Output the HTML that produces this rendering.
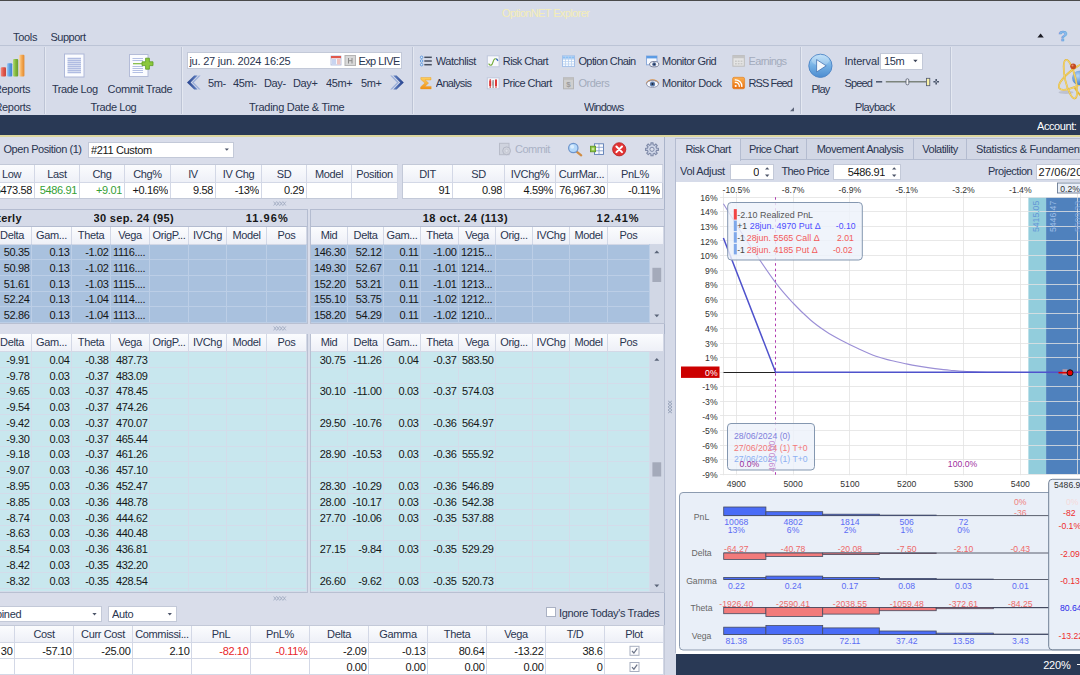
<!DOCTYPE html><html><head><meta charset='utf-8'><title>OptionNET Explorer</title><style>
html,body{margin:0;padding:0;}
body{width:1080px;height:675px;overflow:hidden;position:relative;background:#d6dbe9;
 font-family:"Liberation Sans",sans-serif;font-size:11px;letter-spacing:-0.35px;color:#2a3550;}
div{position:absolute;box-sizing:border-box;white-space:nowrap;overflow:hidden;}
svg{position:absolute;overflow:visible}
.t{overflow:hidden}
.hd{background:linear-gradient(#fbfcfe,#eef0f7);border-right:1px solid #d3d8e6;border-bottom:1px solid #d3d8e6;text-align:center}
.b{font-weight:bold;font-family:"Liberation Sans",sans-serif;letter-spacing:0}
</style></head><body>
<div style="left:0px;top:0px;width:1080px;height:1px;background:#4a4a4a"></div>
<div class="t" style="left:502px;top:6px;width:130px;height:14px;line-height:14px;text-align:left;color:#f4edb6;letter-spacing:-0.613px;">OptionNET Explorer</div>
<div class="t" style="left:13px;top:30px;width:30px;height:14px;line-height:14px;text-align:left;letter-spacing:-0.316px;">Tools</div>
<div class="t" style="left:50.5px;top:30px;width:45px;height:14px;line-height:14px;text-align:left;letter-spacing:-0.490px;">Support</div>
<div style="left:0px;top:45px;width:1080px;height:1px;background:#bcc4d6"></div>
<div style="left:0px;top:46px;width:1080px;height:69px;background:#d6dbe9"></div>
<div style="left:44px;top:47px;width:1px;height:67px;background:#bdc4d5"></div>
<div style="left:45px;top:47px;width:1px;height:67px;background:#e4e8f1"></div>
<div style="left:181px;top:47px;width:1px;height:67px;background:#bdc4d5"></div>
<div style="left:182px;top:47px;width:1px;height:67px;background:#e4e8f1"></div>
<div style="left:412px;top:47px;width:1px;height:67px;background:#bdc4d5"></div>
<div style="left:413px;top:47px;width:1px;height:67px;background:#e4e8f1"></div>
<div style="left:800px;top:47px;width:1px;height:67px;background:#bdc4d5"></div>
<div style="left:801px;top:47px;width:1px;height:67px;background:#e4e8f1"></div>
<div style="left:950px;top:47px;width:1px;height:67px;background:#bdc4d5"></div>
<div style="left:951px;top:47px;width:1px;height:67px;background:#e4e8f1"></div>
<div style="left:0px;top:115px;width:1080px;height:20px;background:#293955"></div>
<div style="left:0px;top:135px;width:1080px;height:2px;background:#ddd79e"></div>
<div class="t" style="left:1037px;top:119px;width:48px;height:14px;line-height:14px;text-align:left;color:#fff;letter-spacing:-0.425px;">Account:</div>
<div class="t" style="left:-6px;top:82px;width:40px;height:14px;line-height:14px;text-align:left;">Reports</div>
<div class="t" style="left:-5.5px;top:100px;width:40px;height:14px;line-height:14px;text-align:left;">Reports</div>
<div class="t" style="left:52px;top:82px;width:48px;height:14px;line-height:14px;text-align:left;letter-spacing:-0.460px;">Trade Log</div>
<div class="t" style="left:107.6px;top:82px;width:70px;height:14px;line-height:14px;text-align:left;letter-spacing:-0.373px;">Commit Trade</div>
<div class="t" style="left:90.4px;top:100px;width:70px;height:14px;line-height:14px;text-align:left;letter-spacing:-0.426px;">Trade Log</div>
<div style="left:187px;top:52px;width:215px;height:17px;background:#fff;border:1px solid #c3c9d8"></div>
<div class="t" style="left:189.4px;top:54px;width:110px;height:14px;line-height:14px;text-align:left;letter-spacing:-0.214px;">ju. 27 jun. 2024 16:25</div>
<div class="t" style="left:358.4px;top:54px;width:42px;height:14px;line-height:14px;text-align:left;letter-spacing:-0.557px;">Exp LIVE</div>
<div class="t" style="left:208px;top:76px;width:34px;height:14px;line-height:14px;text-align:left;">5m-</div>
<div class="t" style="left:233px;top:76px;width:34px;height:14px;line-height:14px;text-align:left;">45m-</div>
<div class="t" style="left:264px;top:76px;width:34px;height:14px;line-height:14px;text-align:left;">Day-</div>
<div class="t" style="left:293px;top:76px;width:34px;height:14px;line-height:14px;text-align:left;">Day+</div>
<div class="t" style="left:326px;top:76px;width:34px;height:14px;line-height:14px;text-align:left;">45m+</div>
<div class="t" style="left:361px;top:76px;width:34px;height:14px;line-height:14px;text-align:left;">5m+</div>
<div class="t" style="left:249px;top:100px;width:135px;height:14px;line-height:14px;text-align:left;letter-spacing:-0.267px;">Trading Date &amp; Time</div>
<div class="t" style="left:435.8px;top:54px;width:45px;height:14px;line-height:14px;text-align:left;letter-spacing:-0.468px;">Watchlist</div>
<div class="t" style="left:435.8px;top:76px;width:45px;height:14px;line-height:14px;text-align:left;letter-spacing:-0.695px;">Analysis</div>
<div class="t" style="left:502.8px;top:54px;width:50px;height:14px;line-height:14px;text-align:left;letter-spacing:-0.614px;">Risk Chart</div>
<div class="t" style="left:502.8px;top:76px;width:55px;height:14px;line-height:14px;text-align:left;letter-spacing:-0.556px;">Price Chart</div>
<div class="t" style="left:578.4px;top:54px;width:62px;height:14px;line-height:14px;text-align:left;letter-spacing:-0.584px;">Option Chain</div>
<div class="t" style="left:578.4px;top:76px;width:40px;height:14px;line-height:14px;text-align:left;color:#a3abbc;letter-spacing:-0.453px;">Orders</div>
<div class="t" style="left:662px;top:54px;width:62px;height:14px;line-height:14px;text-align:left;letter-spacing:-0.526px;">Monitor Grid</div>
<div class="t" style="left:662px;top:76px;width:64px;height:14px;line-height:14px;text-align:left;letter-spacing:-0.433px;">Monitor Dock</div>
<div class="t" style="left:748.6px;top:54px;width:45px;height:14px;line-height:14px;text-align:left;color:#a3abbc;letter-spacing:-0.702px;">Earnings</div>
<div class="t" style="left:748.6px;top:76px;width:50px;height:14px;line-height:14px;text-align:left;letter-spacing:-0.918px;">RSS Feed</div>
<div class="t" style="left:584px;top:100px;width:90px;height:14px;line-height:14px;text-align:left;letter-spacing:-0.746px;">Windows</div>
<div class="t" style="left:811.4px;top:82px;width:24px;height:14px;line-height:14px;text-align:left;letter-spacing:-0.875px;">Play</div>
<div class="t" style="left:844.4px;top:54px;width:40px;height:14px;line-height:14px;text-align:left;letter-spacing:-0.159px;">Interval</div>
<div style="left:880px;top:53px;width:43px;height:17px;background:#fff;border:1px solid #c3c9d8"></div>
<div class="t" style="left:884px;top:54px;width:25px;height:14px;line-height:14px;text-align:left;">15m</div>
<div class="t" style="left:844.4px;top:76px;width:35px;height:14px;line-height:14px;text-align:left;letter-spacing:-0.802px;">Speed</div>
<div class="t" style="left:855px;top:100px;width:90px;height:14px;line-height:14px;text-align:left;letter-spacing:-0.629px;">Playback</div>
<div style="left:0px;top:137px;width:665px;height:538px;background:#d9ddea"></div>
<div style="left:664px;top:137px;width:1px;height:538px;background:#aab4ca"></div>
<div style="left:665px;top:137px;width:11px;height:538px;background:#d5dae8"></div>
<div class="t" style="left:3.4px;top:142px;width:82px;height:15px;line-height:15px;text-align:left;letter-spacing:-0.435px;">Open Position (1)</div>
<div style="left:88px;top:142px;width:146px;height:16px;background:#fff;border:1px solid #c3c9d8"></div>
<div class="t" style="left:91px;top:143px;width:100px;height:14px;line-height:14px;text-align:left;color:#161616">#211 Custom</div>
<div class="t" style="left:515px;top:142px;width:40px;height:15px;line-height:15px;text-align:left;color:#a9b1c5;letter-spacing:-0.515px;">Commit</div>
<div style="left:-12px;top:164px;width:410px;height:35px;background:#fff;border:1px solid #c3c9d8"></div>
<div class="t hd" style="left:-11px;top:165px;width:46px;height:18px;line-height:18px;text-align:center;">Low</div>
<div class="t" style="left:-11px;top:183px;width:43px;height:15px;line-height:15px;text-align:right;color:#161616;">5473.58</div>
<div style="left:34px;top:183px;width:1px;height:15px;background:#d3d8e6"></div>
<div class="t hd" style="left:35px;top:165px;width:45px;height:18px;line-height:18px;text-align:center;">Last</div>
<div class="t" style="left:35px;top:183px;width:42px;height:15px;line-height:15px;text-align:right;color:#35a035;">5486.91</div>
<div style="left:79px;top:183px;width:1px;height:15px;background:#d3d8e6"></div>
<div class="t hd" style="left:80px;top:165px;width:45px;height:18px;line-height:18px;text-align:center;">Chg</div>
<div class="t" style="left:80px;top:183px;width:42px;height:15px;line-height:15px;text-align:right;color:#35a035;">+9.01</div>
<div style="left:124px;top:183px;width:1px;height:15px;background:#d3d8e6"></div>
<div class="t hd" style="left:125px;top:165px;width:46px;height:18px;line-height:18px;text-align:center;">Chg%</div>
<div class="t" style="left:125px;top:183px;width:43px;height:15px;line-height:15px;text-align:right;color:#161616;">+0.16%</div>
<div style="left:170px;top:183px;width:1px;height:15px;background:#d3d8e6"></div>
<div class="t hd" style="left:171px;top:165px;width:45px;height:18px;line-height:18px;text-align:center;">IV</div>
<div class="t" style="left:171px;top:183px;width:42px;height:15px;line-height:15px;text-align:right;color:#161616;">9.58</div>
<div style="left:215px;top:183px;width:1px;height:15px;background:#d3d8e6"></div>
<div class="t hd" style="left:216px;top:165px;width:46px;height:18px;line-height:18px;text-align:center;">IV Chg</div>
<div class="t" style="left:216px;top:183px;width:43px;height:15px;line-height:15px;text-align:right;color:#161616;">-13%</div>
<div style="left:261px;top:183px;width:1px;height:15px;background:#d3d8e6"></div>
<div class="t hd" style="left:262px;top:165px;width:45px;height:18px;line-height:18px;text-align:center;">SD</div>
<div class="t" style="left:262px;top:183px;width:42px;height:15px;line-height:15px;text-align:right;color:#161616;">0.29</div>
<div style="left:306px;top:183px;width:1px;height:15px;background:#d3d8e6"></div>
<div class="t hd" style="left:307px;top:165px;width:45px;height:18px;line-height:18px;text-align:center;">Model</div>
<div class="t" style="left:307px;top:183px;width:42px;height:15px;line-height:15px;text-align:right;color:#161616;"></div>
<div style="left:351px;top:183px;width:1px;height:15px;background:#d3d8e6"></div>
<div class="t hd" style="left:352px;top:165px;width:46px;height:18px;line-height:18px;text-align:center;">Position</div>
<div class="t" style="left:352px;top:183px;width:43px;height:15px;line-height:15px;text-align:right;color:#161616;"></div>
<div style="left:397px;top:183px;width:1px;height:15px;background:#d3d8e6"></div>
<div style="left:402px;top:164px;width:261px;height:35px;background:#fff;border:1px solid #c3c9d8"></div>
<div class="t hd" style="left:403px;top:165px;width:50px;height:18px;line-height:18px;text-align:center;">DIT</div>
<div class="t" style="left:402px;top:183px;width:48px;height:15px;line-height:15px;text-align:right;color:#161616">91</div>
<div style="left:452px;top:183px;width:1px;height:15px;background:#d3d8e6"></div>
<div class="t hd" style="left:453px;top:165px;width:52px;height:18px;line-height:18px;text-align:center;">SD</div>
<div class="t" style="left:453px;top:183px;width:49px;height:15px;line-height:15px;text-align:right;color:#161616">0.98</div>
<div style="left:504px;top:183px;width:1px;height:15px;background:#d3d8e6"></div>
<div class="t hd" style="left:505px;top:165px;width:51px;height:18px;line-height:18px;text-align:center;">IVChg%</div>
<div class="t" style="left:505px;top:183px;width:48px;height:15px;line-height:15px;text-align:right;color:#161616">4.59%</div>
<div style="left:555px;top:183px;width:1px;height:15px;background:#d3d8e6"></div>
<div class="t hd" style="left:556px;top:165px;width:52px;height:18px;line-height:18px;text-align:center;">CurrMar...</div>
<div class="t" style="left:556px;top:183px;width:49px;height:15px;line-height:15px;text-align:right;color:#161616">76,967.30</div>
<div style="left:607px;top:183px;width:1px;height:15px;background:#d3d8e6"></div>
<div class="t hd" style="left:608px;top:165px;width:55px;height:18px;line-height:18px;text-align:center;">PnL%</div>
<div class="t" style="left:608px;top:183px;width:52px;height:15px;line-height:15px;text-align:right;color:#161616">-0.11%</div>
<div style="left:-5px;top:209.2px;width:313px;height:18px;background:#d5dae8;border:1px solid #b4bcd0"></div>
<div style="left:310px;top:209.2px;width:355px;height:18px;background:#d5dae8;border:1px solid #b4bcd0"></div>
<div class="t" style="left:-60px;top:210.2px;width:81.8px;height:16px;line-height:16px;text-align:right;color:#161616;font-weight:bold;letter-spacing:0.25px;">Quarterly</div>
<div class="t" style="left:93.5px;top:210.2px;width:100px;height:16px;line-height:16px;text-align:left;color:#161616;font-weight:bold;letter-spacing:0.346px;">30 sep. 24 (95)</div>
<div class="t" style="left:245.8px;top:210.2px;width:50px;height:16px;line-height:16px;text-align:left;color:#161616;font-weight:bold;letter-spacing:1.033px;">11.96%</div>
<div class="t" style="left:422.8px;top:210.2px;width:100px;height:16px;line-height:16px;text-align:left;color:#161616;font-weight:bold;letter-spacing:0.433px;">18 oct. 24 (113)</div>
<div class="t" style="left:596.6px;top:210.2px;width:50px;height:16px;line-height:16px;text-align:left;color:#161616;font-weight:bold;letter-spacing:0.932px;">12.41%</div>
<div style="left:-5px;top:226.7px;width:313px;height:97.30000000000001px;background:#a9c1de;border:1px solid #b9c0d2"></div>
<div style="left:310px;top:226.7px;width:355px;height:97.30000000000001px;background:#a9c1de;border:1px solid #b9c0d2"></div>
<div class="t hd" style="left:-7px;top:227px;width:39px;height:18px;line-height:18px;text-align:center;line-height:17px;">Delta</div>
<div class="t hd" style="left:32px;top:227px;width:40px;height:18px;line-height:18px;text-align:center;line-height:17px;">Gam...</div>
<div class="t hd" style="left:72px;top:227px;width:39px;height:18px;line-height:18px;text-align:center;line-height:17px;">Theta</div>
<div class="t hd" style="left:111px;top:227px;width:39px;height:18px;line-height:18px;text-align:center;line-height:17px;">Vega</div>
<div class="t hd" style="left:150px;top:227px;width:39px;height:18px;line-height:18px;text-align:center;line-height:17px;">OrigP...</div>
<div class="t hd" style="left:189px;top:227px;width:38px;height:18px;line-height:18px;text-align:center;line-height:17px;">IVChg</div>
<div class="t hd" style="left:227px;top:227px;width:40px;height:18px;line-height:18px;text-align:center;line-height:17px;">Model</div>
<div class="t hd" style="left:267px;top:227px;width:40px;height:18px;line-height:18px;text-align:center;line-height:17px;">Pos</div>
<div class="t hd" style="left:311px;top:227px;width:37px;height:18px;line-height:18px;text-align:center;line-height:17px;">Mid</div>
<div class="t hd" style="left:348px;top:227px;width:36px;height:18px;line-height:18px;text-align:center;line-height:17px;">Delta</div>
<div class="t hd" style="left:384px;top:227px;width:37px;height:18px;line-height:18px;text-align:center;line-height:17px;">Gam...</div>
<div class="t hd" style="left:421px;top:227px;width:38px;height:18px;line-height:18px;text-align:center;line-height:17px;">Theta</div>
<div class="t hd" style="left:459px;top:227px;width:37px;height:18px;line-height:18px;text-align:center;line-height:17px;">Vega</div>
<div class="t hd" style="left:496px;top:227px;width:37px;height:18px;line-height:18px;text-align:center;line-height:17px;">Orig...</div>
<div class="t hd" style="left:533px;top:227px;width:37px;height:18px;line-height:18px;text-align:center;line-height:17px;">IVChg</div>
<div class="t hd" style="left:570px;top:227px;width:38px;height:18px;line-height:18px;text-align:center;line-height:17px;">Model</div>
<div class="t hd" style="left:608px;top:227px;width:42px;height:18px;line-height:18px;text-align:center;line-height:17px;">Pos</div>
<div class="hd" style="left:649px;top:227px;width:15px;height:18px;"></div>
<div style="left:650px;top:245px;width:14px;height:78px;background:#d1d7e5"></div>
<div class="t" style="left:-7px;top:244px;width:39px;height:16px;line-height:16px;text-align:right;padding:0 1.4px 0 2px;color:#161616;border-right:1px solid #bccee6;border-bottom:1px solid #bccee6;">50.35</div>
<div class="t" style="left:32px;top:244px;width:40px;height:16px;line-height:16px;text-align:right;padding:0 1.4px 0 2px;color:#161616;border-right:1px solid #bccee6;border-bottom:1px solid #bccee6;">0.13</div>
<div class="t" style="left:72px;top:244px;width:39px;height:16px;line-height:16px;text-align:right;padding:0 1.4px 0 2px;color:#161616;border-right:1px solid #bccee6;border-bottom:1px solid #bccee6;">-1.02</div>
<div class="t" style="left:111px;top:244px;width:39px;height:16px;line-height:16px;text-align:left;padding:0 1.4px 0 2px;color:#161616;border-right:1px solid #bccee6;border-bottom:1px solid #bccee6;">1116....</div>
<div class="t" style="left:150px;top:244px;width:39px;height:16px;line-height:16px;text-align:right;padding:0 1.4px 0 2px;color:#161616;border-right:1px solid #bccee6;border-bottom:1px solid #bccee6;"></div>
<div class="t" style="left:189px;top:244px;width:38px;height:16px;line-height:16px;text-align:right;padding:0 1.4px 0 2px;color:#161616;border-right:1px solid #bccee6;border-bottom:1px solid #bccee6;"></div>
<div class="t" style="left:227px;top:244px;width:40px;height:16px;line-height:16px;text-align:right;padding:0 1.4px 0 2px;color:#161616;border-right:1px solid #bccee6;border-bottom:1px solid #bccee6;"></div>
<div class="t" style="left:267px;top:244px;width:40px;height:16px;line-height:16px;text-align:right;padding:0 1.4px 0 2px;color:#161616;border-right:1px solid #bccee6;border-bottom:1px solid #bccee6;"></div>
<div class="t" style="left:311px;top:244px;width:37px;height:16px;line-height:16px;text-align:right;padding:0 1.4px 0 2px;color:#161616;border-right:1px solid #bccee6;border-bottom:1px solid #bccee6;">146.30</div>
<div class="t" style="left:348px;top:244px;width:36px;height:16px;line-height:16px;text-align:right;padding:0 1.4px 0 2px;color:#161616;border-right:1px solid #bccee6;border-bottom:1px solid #bccee6;">52.12</div>
<div class="t" style="left:384px;top:244px;width:37px;height:16px;line-height:16px;text-align:right;padding:0 1.4px 0 2px;color:#161616;border-right:1px solid #bccee6;border-bottom:1px solid #bccee6;">0.11</div>
<div class="t" style="left:421px;top:244px;width:38px;height:16px;line-height:16px;text-align:right;padding:0 1.4px 0 2px;color:#161616;border-right:1px solid #bccee6;border-bottom:1px solid #bccee6;">-1.00</div>
<div class="t" style="left:459px;top:244px;width:37px;height:16px;line-height:16px;text-align:left;padding:0 1.4px 0 2px;color:#161616;border-right:1px solid #bccee6;border-bottom:1px solid #bccee6;">1215...</div>
<div class="t" style="left:496px;top:244px;width:37px;height:16px;line-height:16px;text-align:right;padding:0 1.4px 0 2px;color:#161616;border-right:1px solid #bccee6;border-bottom:1px solid #bccee6;"></div>
<div class="t" style="left:533px;top:244px;width:37px;height:16px;line-height:16px;text-align:right;padding:0 1.4px 0 2px;color:#161616;border-right:1px solid #bccee6;border-bottom:1px solid #bccee6;"></div>
<div class="t" style="left:570px;top:244px;width:38px;height:16px;line-height:16px;text-align:right;padding:0 1.4px 0 2px;color:#161616;border-right:1px solid #bccee6;border-bottom:1px solid #bccee6;"></div>
<div class="t" style="left:608px;top:244px;width:42px;height:16px;line-height:16px;text-align:right;padding:0 1.4px 0 2px;color:#161616;border-right:1px solid #bccee6;border-bottom:1px solid #bccee6;"></div>
<div class="t" style="left:-7px;top:260px;width:39px;height:16px;line-height:16px;text-align:right;padding:0 1.4px 0 2px;color:#161616;border-right:1px solid #bccee6;border-bottom:1px solid #bccee6;">50.98</div>
<div class="t" style="left:32px;top:260px;width:40px;height:16px;line-height:16px;text-align:right;padding:0 1.4px 0 2px;color:#161616;border-right:1px solid #bccee6;border-bottom:1px solid #bccee6;">0.13</div>
<div class="t" style="left:72px;top:260px;width:39px;height:16px;line-height:16px;text-align:right;padding:0 1.4px 0 2px;color:#161616;border-right:1px solid #bccee6;border-bottom:1px solid #bccee6;">-1.02</div>
<div class="t" style="left:111px;top:260px;width:39px;height:16px;line-height:16px;text-align:left;padding:0 1.4px 0 2px;color:#161616;border-right:1px solid #bccee6;border-bottom:1px solid #bccee6;">1116....</div>
<div class="t" style="left:150px;top:260px;width:39px;height:16px;line-height:16px;text-align:right;padding:0 1.4px 0 2px;color:#161616;border-right:1px solid #bccee6;border-bottom:1px solid #bccee6;"></div>
<div class="t" style="left:189px;top:260px;width:38px;height:16px;line-height:16px;text-align:right;padding:0 1.4px 0 2px;color:#161616;border-right:1px solid #bccee6;border-bottom:1px solid #bccee6;"></div>
<div class="t" style="left:227px;top:260px;width:40px;height:16px;line-height:16px;text-align:right;padding:0 1.4px 0 2px;color:#161616;border-right:1px solid #bccee6;border-bottom:1px solid #bccee6;"></div>
<div class="t" style="left:267px;top:260px;width:40px;height:16px;line-height:16px;text-align:right;padding:0 1.4px 0 2px;color:#161616;border-right:1px solid #bccee6;border-bottom:1px solid #bccee6;"></div>
<div class="t" style="left:311px;top:260px;width:37px;height:16px;line-height:16px;text-align:right;padding:0 1.4px 0 2px;color:#161616;border-right:1px solid #bccee6;border-bottom:1px solid #bccee6;">149.30</div>
<div class="t" style="left:348px;top:260px;width:36px;height:16px;line-height:16px;text-align:right;padding:0 1.4px 0 2px;color:#161616;border-right:1px solid #bccee6;border-bottom:1px solid #bccee6;">52.67</div>
<div class="t" style="left:384px;top:260px;width:37px;height:16px;line-height:16px;text-align:right;padding:0 1.4px 0 2px;color:#161616;border-right:1px solid #bccee6;border-bottom:1px solid #bccee6;">0.11</div>
<div class="t" style="left:421px;top:260px;width:38px;height:16px;line-height:16px;text-align:right;padding:0 1.4px 0 2px;color:#161616;border-right:1px solid #bccee6;border-bottom:1px solid #bccee6;">-1.01</div>
<div class="t" style="left:459px;top:260px;width:37px;height:16px;line-height:16px;text-align:left;padding:0 1.4px 0 2px;color:#161616;border-right:1px solid #bccee6;border-bottom:1px solid #bccee6;">1214...</div>
<div class="t" style="left:496px;top:260px;width:37px;height:16px;line-height:16px;text-align:right;padding:0 1.4px 0 2px;color:#161616;border-right:1px solid #bccee6;border-bottom:1px solid #bccee6;"></div>
<div class="t" style="left:533px;top:260px;width:37px;height:16px;line-height:16px;text-align:right;padding:0 1.4px 0 2px;color:#161616;border-right:1px solid #bccee6;border-bottom:1px solid #bccee6;"></div>
<div class="t" style="left:570px;top:260px;width:38px;height:16px;line-height:16px;text-align:right;padding:0 1.4px 0 2px;color:#161616;border-right:1px solid #bccee6;border-bottom:1px solid #bccee6;"></div>
<div class="t" style="left:608px;top:260px;width:42px;height:16px;line-height:16px;text-align:right;padding:0 1.4px 0 2px;color:#161616;border-right:1px solid #bccee6;border-bottom:1px solid #bccee6;"></div>
<div class="t" style="left:-7px;top:276px;width:39px;height:16px;line-height:16px;text-align:right;padding:0 1.4px 0 2px;color:#161616;border-right:1px solid #bccee6;border-bottom:1px solid #bccee6;">51.61</div>
<div class="t" style="left:32px;top:276px;width:40px;height:16px;line-height:16px;text-align:right;padding:0 1.4px 0 2px;color:#161616;border-right:1px solid #bccee6;border-bottom:1px solid #bccee6;">0.13</div>
<div class="t" style="left:72px;top:276px;width:39px;height:16px;line-height:16px;text-align:right;padding:0 1.4px 0 2px;color:#161616;border-right:1px solid #bccee6;border-bottom:1px solid #bccee6;">-1.03</div>
<div class="t" style="left:111px;top:276px;width:39px;height:16px;line-height:16px;text-align:left;padding:0 1.4px 0 2px;color:#161616;border-right:1px solid #bccee6;border-bottom:1px solid #bccee6;">1115....</div>
<div class="t" style="left:150px;top:276px;width:39px;height:16px;line-height:16px;text-align:right;padding:0 1.4px 0 2px;color:#161616;border-right:1px solid #bccee6;border-bottom:1px solid #bccee6;"></div>
<div class="t" style="left:189px;top:276px;width:38px;height:16px;line-height:16px;text-align:right;padding:0 1.4px 0 2px;color:#161616;border-right:1px solid #bccee6;border-bottom:1px solid #bccee6;"></div>
<div class="t" style="left:227px;top:276px;width:40px;height:16px;line-height:16px;text-align:right;padding:0 1.4px 0 2px;color:#161616;border-right:1px solid #bccee6;border-bottom:1px solid #bccee6;"></div>
<div class="t" style="left:267px;top:276px;width:40px;height:16px;line-height:16px;text-align:right;padding:0 1.4px 0 2px;color:#161616;border-right:1px solid #bccee6;border-bottom:1px solid #bccee6;"></div>
<div class="t" style="left:311px;top:276px;width:37px;height:16px;line-height:16px;text-align:right;padding:0 1.4px 0 2px;color:#161616;border-right:1px solid #bccee6;border-bottom:1px solid #bccee6;">152.20</div>
<div class="t" style="left:348px;top:276px;width:36px;height:16px;line-height:16px;text-align:right;padding:0 1.4px 0 2px;color:#161616;border-right:1px solid #bccee6;border-bottom:1px solid #bccee6;">53.21</div>
<div class="t" style="left:384px;top:276px;width:37px;height:16px;line-height:16px;text-align:right;padding:0 1.4px 0 2px;color:#161616;border-right:1px solid #bccee6;border-bottom:1px solid #bccee6;">0.11</div>
<div class="t" style="left:421px;top:276px;width:38px;height:16px;line-height:16px;text-align:right;padding:0 1.4px 0 2px;color:#161616;border-right:1px solid #bccee6;border-bottom:1px solid #bccee6;">-1.01</div>
<div class="t" style="left:459px;top:276px;width:37px;height:16px;line-height:16px;text-align:left;padding:0 1.4px 0 2px;color:#161616;border-right:1px solid #bccee6;border-bottom:1px solid #bccee6;">1213...</div>
<div class="t" style="left:496px;top:276px;width:37px;height:16px;line-height:16px;text-align:right;padding:0 1.4px 0 2px;color:#161616;border-right:1px solid #bccee6;border-bottom:1px solid #bccee6;"></div>
<div class="t" style="left:533px;top:276px;width:37px;height:16px;line-height:16px;text-align:right;padding:0 1.4px 0 2px;color:#161616;border-right:1px solid #bccee6;border-bottom:1px solid #bccee6;"></div>
<div class="t" style="left:570px;top:276px;width:38px;height:16px;line-height:16px;text-align:right;padding:0 1.4px 0 2px;color:#161616;border-right:1px solid #bccee6;border-bottom:1px solid #bccee6;"></div>
<div class="t" style="left:608px;top:276px;width:42px;height:16px;line-height:16px;text-align:right;padding:0 1.4px 0 2px;color:#161616;border-right:1px solid #bccee6;border-bottom:1px solid #bccee6;"></div>
<div class="t" style="left:-7px;top:292px;width:39px;height:15px;line-height:15px;text-align:right;padding:0 1.4px 0 2px;color:#161616;border-right:1px solid #bccee6;border-bottom:1px solid #bccee6;">52.24</div>
<div class="t" style="left:32px;top:292px;width:40px;height:15px;line-height:15px;text-align:right;padding:0 1.4px 0 2px;color:#161616;border-right:1px solid #bccee6;border-bottom:1px solid #bccee6;">0.13</div>
<div class="t" style="left:72px;top:292px;width:39px;height:15px;line-height:15px;text-align:right;padding:0 1.4px 0 2px;color:#161616;border-right:1px solid #bccee6;border-bottom:1px solid #bccee6;">-1.04</div>
<div class="t" style="left:111px;top:292px;width:39px;height:15px;line-height:15px;text-align:left;padding:0 1.4px 0 2px;color:#161616;border-right:1px solid #bccee6;border-bottom:1px solid #bccee6;">1114....</div>
<div class="t" style="left:150px;top:292px;width:39px;height:15px;line-height:15px;text-align:right;padding:0 1.4px 0 2px;color:#161616;border-right:1px solid #bccee6;border-bottom:1px solid #bccee6;"></div>
<div class="t" style="left:189px;top:292px;width:38px;height:15px;line-height:15px;text-align:right;padding:0 1.4px 0 2px;color:#161616;border-right:1px solid #bccee6;border-bottom:1px solid #bccee6;"></div>
<div class="t" style="left:227px;top:292px;width:40px;height:15px;line-height:15px;text-align:right;padding:0 1.4px 0 2px;color:#161616;border-right:1px solid #bccee6;border-bottom:1px solid #bccee6;"></div>
<div class="t" style="left:267px;top:292px;width:40px;height:15px;line-height:15px;text-align:right;padding:0 1.4px 0 2px;color:#161616;border-right:1px solid #bccee6;border-bottom:1px solid #bccee6;"></div>
<div class="t" style="left:311px;top:292px;width:37px;height:15px;line-height:15px;text-align:right;padding:0 1.4px 0 2px;color:#161616;border-right:1px solid #bccee6;border-bottom:1px solid #bccee6;">155.10</div>
<div class="t" style="left:348px;top:292px;width:36px;height:15px;line-height:15px;text-align:right;padding:0 1.4px 0 2px;color:#161616;border-right:1px solid #bccee6;border-bottom:1px solid #bccee6;">53.75</div>
<div class="t" style="left:384px;top:292px;width:37px;height:15px;line-height:15px;text-align:right;padding:0 1.4px 0 2px;color:#161616;border-right:1px solid #bccee6;border-bottom:1px solid #bccee6;">0.11</div>
<div class="t" style="left:421px;top:292px;width:38px;height:15px;line-height:15px;text-align:right;padding:0 1.4px 0 2px;color:#161616;border-right:1px solid #bccee6;border-bottom:1px solid #bccee6;">-1.02</div>
<div class="t" style="left:459px;top:292px;width:37px;height:15px;line-height:15px;text-align:left;padding:0 1.4px 0 2px;color:#161616;border-right:1px solid #bccee6;border-bottom:1px solid #bccee6;">1212...</div>
<div class="t" style="left:496px;top:292px;width:37px;height:15px;line-height:15px;text-align:right;padding:0 1.4px 0 2px;color:#161616;border-right:1px solid #bccee6;border-bottom:1px solid #bccee6;"></div>
<div class="t" style="left:533px;top:292px;width:37px;height:15px;line-height:15px;text-align:right;padding:0 1.4px 0 2px;color:#161616;border-right:1px solid #bccee6;border-bottom:1px solid #bccee6;"></div>
<div class="t" style="left:570px;top:292px;width:38px;height:15px;line-height:15px;text-align:right;padding:0 1.4px 0 2px;color:#161616;border-right:1px solid #bccee6;border-bottom:1px solid #bccee6;"></div>
<div class="t" style="left:608px;top:292px;width:42px;height:15px;line-height:15px;text-align:right;padding:0 1.4px 0 2px;color:#161616;border-right:1px solid #bccee6;border-bottom:1px solid #bccee6;"></div>
<div class="t" style="left:-7px;top:307px;width:39px;height:16px;line-height:16px;text-align:right;padding:0 1.4px 0 2px;color:#161616;border-right:1px solid #bccee6;border-bottom:1px solid #bccee6;">52.86</div>
<div class="t" style="left:32px;top:307px;width:40px;height:16px;line-height:16px;text-align:right;padding:0 1.4px 0 2px;color:#161616;border-right:1px solid #bccee6;border-bottom:1px solid #bccee6;">0.13</div>
<div class="t" style="left:72px;top:307px;width:39px;height:16px;line-height:16px;text-align:right;padding:0 1.4px 0 2px;color:#161616;border-right:1px solid #bccee6;border-bottom:1px solid #bccee6;">-1.04</div>
<div class="t" style="left:111px;top:307px;width:39px;height:16px;line-height:16px;text-align:left;padding:0 1.4px 0 2px;color:#161616;border-right:1px solid #bccee6;border-bottom:1px solid #bccee6;">1113....</div>
<div class="t" style="left:150px;top:307px;width:39px;height:16px;line-height:16px;text-align:right;padding:0 1.4px 0 2px;color:#161616;border-right:1px solid #bccee6;border-bottom:1px solid #bccee6;"></div>
<div class="t" style="left:189px;top:307px;width:38px;height:16px;line-height:16px;text-align:right;padding:0 1.4px 0 2px;color:#161616;border-right:1px solid #bccee6;border-bottom:1px solid #bccee6;"></div>
<div class="t" style="left:227px;top:307px;width:40px;height:16px;line-height:16px;text-align:right;padding:0 1.4px 0 2px;color:#161616;border-right:1px solid #bccee6;border-bottom:1px solid #bccee6;"></div>
<div class="t" style="left:267px;top:307px;width:40px;height:16px;line-height:16px;text-align:right;padding:0 1.4px 0 2px;color:#161616;border-right:1px solid #bccee6;border-bottom:1px solid #bccee6;"></div>
<div class="t" style="left:311px;top:307px;width:37px;height:16px;line-height:16px;text-align:right;padding:0 1.4px 0 2px;color:#161616;border-right:1px solid #bccee6;border-bottom:1px solid #bccee6;">158.20</div>
<div class="t" style="left:348px;top:307px;width:36px;height:16px;line-height:16px;text-align:right;padding:0 1.4px 0 2px;color:#161616;border-right:1px solid #bccee6;border-bottom:1px solid #bccee6;">54.29</div>
<div class="t" style="left:384px;top:307px;width:37px;height:16px;line-height:16px;text-align:right;padding:0 1.4px 0 2px;color:#161616;border-right:1px solid #bccee6;border-bottom:1px solid #bccee6;">0.11</div>
<div class="t" style="left:421px;top:307px;width:38px;height:16px;line-height:16px;text-align:right;padding:0 1.4px 0 2px;color:#161616;border-right:1px solid #bccee6;border-bottom:1px solid #bccee6;">-1.02</div>
<div class="t" style="left:459px;top:307px;width:37px;height:16px;line-height:16px;text-align:left;padding:0 1.4px 0 2px;color:#161616;border-right:1px solid #bccee6;border-bottom:1px solid #bccee6;">1210...</div>
<div class="t" style="left:496px;top:307px;width:37px;height:16px;line-height:16px;text-align:right;padding:0 1.4px 0 2px;color:#161616;border-right:1px solid #bccee6;border-bottom:1px solid #bccee6;"></div>
<div class="t" style="left:533px;top:307px;width:37px;height:16px;line-height:16px;text-align:right;padding:0 1.4px 0 2px;color:#161616;border-right:1px solid #bccee6;border-bottom:1px solid #bccee6;"></div>
<div class="t" style="left:570px;top:307px;width:38px;height:16px;line-height:16px;text-align:right;padding:0 1.4px 0 2px;color:#161616;border-right:1px solid #bccee6;border-bottom:1px solid #bccee6;"></div>
<div class="t" style="left:608px;top:307px;width:42px;height:16px;line-height:16px;text-align:right;padding:0 1.4px 0 2px;color:#161616;border-right:1px solid #bccee6;border-bottom:1px solid #bccee6;"></div>
<div style="left:-5px;top:334px;width:313px;height:259px;background:#c8e7ee;border:1px solid #b9c0d2"></div>
<div style="left:310px;top:334px;width:355px;height:259px;background:#c8e7ee;border:1px solid #b9c0d2"></div>
<div class="t hd" style="left:-7px;top:334px;width:39px;height:18px;line-height:18px;text-align:center;line-height:17px;">Delta</div>
<div class="t hd" style="left:32px;top:334px;width:40px;height:18px;line-height:18px;text-align:center;line-height:17px;">Gam...</div>
<div class="t hd" style="left:72px;top:334px;width:39px;height:18px;line-height:18px;text-align:center;line-height:17px;">Theta</div>
<div class="t hd" style="left:111px;top:334px;width:39px;height:18px;line-height:18px;text-align:center;line-height:17px;">Vega</div>
<div class="t hd" style="left:150px;top:334px;width:39px;height:18px;line-height:18px;text-align:center;line-height:17px;">OrigP...</div>
<div class="t hd" style="left:189px;top:334px;width:38px;height:18px;line-height:18px;text-align:center;line-height:17px;">IVChg</div>
<div class="t hd" style="left:227px;top:334px;width:40px;height:18px;line-height:18px;text-align:center;line-height:17px;">Model</div>
<div class="t hd" style="left:267px;top:334px;width:40px;height:18px;line-height:18px;text-align:center;line-height:17px;">Pos</div>
<div class="t hd" style="left:311px;top:334px;width:37px;height:18px;line-height:18px;text-align:center;line-height:17px;">Mid</div>
<div class="t hd" style="left:348px;top:334px;width:36px;height:18px;line-height:18px;text-align:center;line-height:17px;">Delta</div>
<div class="t hd" style="left:384px;top:334px;width:37px;height:18px;line-height:18px;text-align:center;line-height:17px;">Gam...</div>
<div class="t hd" style="left:421px;top:334px;width:38px;height:18px;line-height:18px;text-align:center;line-height:17px;">Theta</div>
<div class="t hd" style="left:459px;top:334px;width:37px;height:18px;line-height:18px;text-align:center;line-height:17px;">Vega</div>
<div class="t hd" style="left:496px;top:334px;width:37px;height:18px;line-height:18px;text-align:center;line-height:17px;">Orig...</div>
<div class="t hd" style="left:533px;top:334px;width:37px;height:18px;line-height:18px;text-align:center;line-height:17px;">IVChg</div>
<div class="t hd" style="left:570px;top:334px;width:38px;height:18px;line-height:18px;text-align:center;line-height:17px;">Model</div>
<div class="t hd" style="left:608px;top:334px;width:42px;height:18px;line-height:18px;text-align:center;line-height:17px;">Pos</div>
<div class="hd" style="left:649px;top:334px;width:15px;height:18px;"></div>
<div style="left:650px;top:352px;width:14px;height:240px;background:#d1d7e5"></div>
<div class="t" style="left:-7px;top:352px;width:39px;height:16px;line-height:16px;text-align:right;padding:0 1.4px 0 2px;color:#161616;border-right:1px solid #d3dcea;border-bottom:1px solid #d3dcea;">-9.91</div>
<div class="t" style="left:32px;top:352px;width:40px;height:16px;line-height:16px;text-align:right;padding:0 1.4px 0 2px;color:#161616;border-right:1px solid #d3dcea;border-bottom:1px solid #d3dcea;">0.04</div>
<div class="t" style="left:72px;top:352px;width:39px;height:16px;line-height:16px;text-align:right;padding:0 1.4px 0 2px;color:#161616;border-right:1px solid #d3dcea;border-bottom:1px solid #d3dcea;">-0.38</div>
<div class="t" style="left:111px;top:352px;width:39px;height:16px;line-height:16px;text-align:right;padding:0 1.4px 0 2px;color:#161616;border-right:1px solid #d3dcea;border-bottom:1px solid #d3dcea;">487.73</div>
<div class="t" style="left:150px;top:352px;width:39px;height:16px;line-height:16px;text-align:right;padding:0 1.4px 0 2px;color:#161616;border-right:1px solid #d3dcea;border-bottom:1px solid #d3dcea;"></div>
<div class="t" style="left:189px;top:352px;width:38px;height:16px;line-height:16px;text-align:right;padding:0 1.4px 0 2px;color:#161616;border-right:1px solid #d3dcea;border-bottom:1px solid #d3dcea;"></div>
<div class="t" style="left:227px;top:352px;width:40px;height:16px;line-height:16px;text-align:right;padding:0 1.4px 0 2px;color:#161616;border-right:1px solid #d3dcea;border-bottom:1px solid #d3dcea;"></div>
<div class="t" style="left:267px;top:352px;width:40px;height:16px;line-height:16px;text-align:right;padding:0 1.4px 0 2px;color:#161616;border-right:1px solid #d3dcea;border-bottom:1px solid #d3dcea;"></div>
<div class="t" style="left:311px;top:352px;width:37px;height:16px;line-height:16px;text-align:right;padding:0 1.4px 0 2px;color:#161616;border-right:1px solid #d3dcea;border-bottom:1px solid #d3dcea;">30.75</div>
<div class="t" style="left:348px;top:352px;width:36px;height:16px;line-height:16px;text-align:right;padding:0 1.4px 0 2px;color:#161616;border-right:1px solid #d3dcea;border-bottom:1px solid #d3dcea;">-11.26</div>
<div class="t" style="left:384px;top:352px;width:37px;height:16px;line-height:16px;text-align:right;padding:0 1.4px 0 2px;color:#161616;border-right:1px solid #d3dcea;border-bottom:1px solid #d3dcea;">0.04</div>
<div class="t" style="left:421px;top:352px;width:38px;height:16px;line-height:16px;text-align:right;padding:0 1.4px 0 2px;color:#161616;border-right:1px solid #d3dcea;border-bottom:1px solid #d3dcea;">-0.37</div>
<div class="t" style="left:459px;top:352px;width:37px;height:16px;line-height:16px;text-align:right;padding:0 1.4px 0 2px;color:#161616;border-right:1px solid #d3dcea;border-bottom:1px solid #d3dcea;">583.50</div>
<div class="t" style="left:496px;top:352px;width:37px;height:16px;line-height:16px;text-align:right;padding:0 1.4px 0 2px;color:#161616;border-right:1px solid #d3dcea;border-bottom:1px solid #d3dcea;"></div>
<div class="t" style="left:533px;top:352px;width:37px;height:16px;line-height:16px;text-align:right;padding:0 1.4px 0 2px;color:#161616;border-right:1px solid #d3dcea;border-bottom:1px solid #d3dcea;"></div>
<div class="t" style="left:570px;top:352px;width:38px;height:16px;line-height:16px;text-align:right;padding:0 1.4px 0 2px;color:#161616;border-right:1px solid #d3dcea;border-bottom:1px solid #d3dcea;"></div>
<div class="t" style="left:608px;top:352px;width:42px;height:16px;line-height:16px;text-align:right;padding:0 1.4px 0 2px;color:#161616;border-right:1px solid #d3dcea;border-bottom:1px solid #d3dcea;"></div>
<div class="t" style="left:-7px;top:368px;width:39px;height:16px;line-height:16px;text-align:right;padding:0 1.4px 0 2px;color:#161616;border-right:1px solid #d3dcea;border-bottom:1px solid #d3dcea;">-9.78</div>
<div class="t" style="left:32px;top:368px;width:40px;height:16px;line-height:16px;text-align:right;padding:0 1.4px 0 2px;color:#161616;border-right:1px solid #d3dcea;border-bottom:1px solid #d3dcea;">0.03</div>
<div class="t" style="left:72px;top:368px;width:39px;height:16px;line-height:16px;text-align:right;padding:0 1.4px 0 2px;color:#161616;border-right:1px solid #d3dcea;border-bottom:1px solid #d3dcea;">-0.37</div>
<div class="t" style="left:111px;top:368px;width:39px;height:16px;line-height:16px;text-align:right;padding:0 1.4px 0 2px;color:#161616;border-right:1px solid #d3dcea;border-bottom:1px solid #d3dcea;">483.09</div>
<div class="t" style="left:150px;top:368px;width:39px;height:16px;line-height:16px;text-align:right;padding:0 1.4px 0 2px;color:#161616;border-right:1px solid #d3dcea;border-bottom:1px solid #d3dcea;"></div>
<div class="t" style="left:189px;top:368px;width:38px;height:16px;line-height:16px;text-align:right;padding:0 1.4px 0 2px;color:#161616;border-right:1px solid #d3dcea;border-bottom:1px solid #d3dcea;"></div>
<div class="t" style="left:227px;top:368px;width:40px;height:16px;line-height:16px;text-align:right;padding:0 1.4px 0 2px;color:#161616;border-right:1px solid #d3dcea;border-bottom:1px solid #d3dcea;"></div>
<div class="t" style="left:267px;top:368px;width:40px;height:16px;line-height:16px;text-align:right;padding:0 1.4px 0 2px;color:#161616;border-right:1px solid #d3dcea;border-bottom:1px solid #d3dcea;"></div>
<div class="t" style="left:311px;top:368px;width:37px;height:16px;line-height:16px;text-align:right;padding:0 1.4px 0 2px;color:#161616;border-right:1px solid #d3dcea;border-bottom:1px solid #d3dcea;"></div>
<div class="t" style="left:348px;top:368px;width:36px;height:16px;line-height:16px;text-align:right;padding:0 1.4px 0 2px;color:#161616;border-right:1px solid #d3dcea;border-bottom:1px solid #d3dcea;"></div>
<div class="t" style="left:384px;top:368px;width:37px;height:16px;line-height:16px;text-align:right;padding:0 1.4px 0 2px;color:#161616;border-right:1px solid #d3dcea;border-bottom:1px solid #d3dcea;"></div>
<div class="t" style="left:421px;top:368px;width:38px;height:16px;line-height:16px;text-align:right;padding:0 1.4px 0 2px;color:#161616;border-right:1px solid #d3dcea;border-bottom:1px solid #d3dcea;"></div>
<div class="t" style="left:459px;top:368px;width:37px;height:16px;line-height:16px;text-align:right;padding:0 1.4px 0 2px;color:#161616;border-right:1px solid #d3dcea;border-bottom:1px solid #d3dcea;"></div>
<div class="t" style="left:496px;top:368px;width:37px;height:16px;line-height:16px;text-align:right;padding:0 1.4px 0 2px;color:#161616;border-right:1px solid #d3dcea;border-bottom:1px solid #d3dcea;"></div>
<div class="t" style="left:533px;top:368px;width:37px;height:16px;line-height:16px;text-align:right;padding:0 1.4px 0 2px;color:#161616;border-right:1px solid #d3dcea;border-bottom:1px solid #d3dcea;"></div>
<div class="t" style="left:570px;top:368px;width:38px;height:16px;line-height:16px;text-align:right;padding:0 1.4px 0 2px;color:#161616;border-right:1px solid #d3dcea;border-bottom:1px solid #d3dcea;"></div>
<div class="t" style="left:608px;top:368px;width:42px;height:16px;line-height:16px;text-align:right;padding:0 1.4px 0 2px;color:#161616;border-right:1px solid #d3dcea;border-bottom:1px solid #d3dcea;"></div>
<div class="t" style="left:-7px;top:384px;width:39px;height:15px;line-height:15px;text-align:right;padding:0 1.4px 0 2px;color:#161616;border-right:1px solid #d3dcea;border-bottom:1px solid #d3dcea;">-9.65</div>
<div class="t" style="left:32px;top:384px;width:40px;height:15px;line-height:15px;text-align:right;padding:0 1.4px 0 2px;color:#161616;border-right:1px solid #d3dcea;border-bottom:1px solid #d3dcea;">0.03</div>
<div class="t" style="left:72px;top:384px;width:39px;height:15px;line-height:15px;text-align:right;padding:0 1.4px 0 2px;color:#161616;border-right:1px solid #d3dcea;border-bottom:1px solid #d3dcea;">-0.37</div>
<div class="t" style="left:111px;top:384px;width:39px;height:15px;line-height:15px;text-align:right;padding:0 1.4px 0 2px;color:#161616;border-right:1px solid #d3dcea;border-bottom:1px solid #d3dcea;">478.45</div>
<div class="t" style="left:150px;top:384px;width:39px;height:15px;line-height:15px;text-align:right;padding:0 1.4px 0 2px;color:#161616;border-right:1px solid #d3dcea;border-bottom:1px solid #d3dcea;"></div>
<div class="t" style="left:189px;top:384px;width:38px;height:15px;line-height:15px;text-align:right;padding:0 1.4px 0 2px;color:#161616;border-right:1px solid #d3dcea;border-bottom:1px solid #d3dcea;"></div>
<div class="t" style="left:227px;top:384px;width:40px;height:15px;line-height:15px;text-align:right;padding:0 1.4px 0 2px;color:#161616;border-right:1px solid #d3dcea;border-bottom:1px solid #d3dcea;"></div>
<div class="t" style="left:267px;top:384px;width:40px;height:15px;line-height:15px;text-align:right;padding:0 1.4px 0 2px;color:#161616;border-right:1px solid #d3dcea;border-bottom:1px solid #d3dcea;"></div>
<div class="t" style="left:311px;top:384px;width:37px;height:15px;line-height:15px;text-align:right;padding:0 1.4px 0 2px;color:#161616;border-right:1px solid #d3dcea;border-bottom:1px solid #d3dcea;">30.10</div>
<div class="t" style="left:348px;top:384px;width:36px;height:15px;line-height:15px;text-align:right;padding:0 1.4px 0 2px;color:#161616;border-right:1px solid #d3dcea;border-bottom:1px solid #d3dcea;">-11.00</div>
<div class="t" style="left:384px;top:384px;width:37px;height:15px;line-height:15px;text-align:right;padding:0 1.4px 0 2px;color:#161616;border-right:1px solid #d3dcea;border-bottom:1px solid #d3dcea;">0.03</div>
<div class="t" style="left:421px;top:384px;width:38px;height:15px;line-height:15px;text-align:right;padding:0 1.4px 0 2px;color:#161616;border-right:1px solid #d3dcea;border-bottom:1px solid #d3dcea;">-0.37</div>
<div class="t" style="left:459px;top:384px;width:37px;height:15px;line-height:15px;text-align:right;padding:0 1.4px 0 2px;color:#161616;border-right:1px solid #d3dcea;border-bottom:1px solid #d3dcea;">574.03</div>
<div class="t" style="left:496px;top:384px;width:37px;height:15px;line-height:15px;text-align:right;padding:0 1.4px 0 2px;color:#161616;border-right:1px solid #d3dcea;border-bottom:1px solid #d3dcea;"></div>
<div class="t" style="left:533px;top:384px;width:37px;height:15px;line-height:15px;text-align:right;padding:0 1.4px 0 2px;color:#161616;border-right:1px solid #d3dcea;border-bottom:1px solid #d3dcea;"></div>
<div class="t" style="left:570px;top:384px;width:38px;height:15px;line-height:15px;text-align:right;padding:0 1.4px 0 2px;color:#161616;border-right:1px solid #d3dcea;border-bottom:1px solid #d3dcea;"></div>
<div class="t" style="left:608px;top:384px;width:42px;height:15px;line-height:15px;text-align:right;padding:0 1.4px 0 2px;color:#161616;border-right:1px solid #d3dcea;border-bottom:1px solid #d3dcea;"></div>
<div class="t" style="left:-7px;top:399px;width:39px;height:16px;line-height:16px;text-align:right;padding:0 1.4px 0 2px;color:#161616;border-right:1px solid #d3dcea;border-bottom:1px solid #d3dcea;">-9.54</div>
<div class="t" style="left:32px;top:399px;width:40px;height:16px;line-height:16px;text-align:right;padding:0 1.4px 0 2px;color:#161616;border-right:1px solid #d3dcea;border-bottom:1px solid #d3dcea;">0.03</div>
<div class="t" style="left:72px;top:399px;width:39px;height:16px;line-height:16px;text-align:right;padding:0 1.4px 0 2px;color:#161616;border-right:1px solid #d3dcea;border-bottom:1px solid #d3dcea;">-0.37</div>
<div class="t" style="left:111px;top:399px;width:39px;height:16px;line-height:16px;text-align:right;padding:0 1.4px 0 2px;color:#161616;border-right:1px solid #d3dcea;border-bottom:1px solid #d3dcea;">474.26</div>
<div class="t" style="left:150px;top:399px;width:39px;height:16px;line-height:16px;text-align:right;padding:0 1.4px 0 2px;color:#161616;border-right:1px solid #d3dcea;border-bottom:1px solid #d3dcea;"></div>
<div class="t" style="left:189px;top:399px;width:38px;height:16px;line-height:16px;text-align:right;padding:0 1.4px 0 2px;color:#161616;border-right:1px solid #d3dcea;border-bottom:1px solid #d3dcea;"></div>
<div class="t" style="left:227px;top:399px;width:40px;height:16px;line-height:16px;text-align:right;padding:0 1.4px 0 2px;color:#161616;border-right:1px solid #d3dcea;border-bottom:1px solid #d3dcea;"></div>
<div class="t" style="left:267px;top:399px;width:40px;height:16px;line-height:16px;text-align:right;padding:0 1.4px 0 2px;color:#161616;border-right:1px solid #d3dcea;border-bottom:1px solid #d3dcea;"></div>
<div class="t" style="left:311px;top:399px;width:37px;height:16px;line-height:16px;text-align:right;padding:0 1.4px 0 2px;color:#161616;border-right:1px solid #d3dcea;border-bottom:1px solid #d3dcea;"></div>
<div class="t" style="left:348px;top:399px;width:36px;height:16px;line-height:16px;text-align:right;padding:0 1.4px 0 2px;color:#161616;border-right:1px solid #d3dcea;border-bottom:1px solid #d3dcea;"></div>
<div class="t" style="left:384px;top:399px;width:37px;height:16px;line-height:16px;text-align:right;padding:0 1.4px 0 2px;color:#161616;border-right:1px solid #d3dcea;border-bottom:1px solid #d3dcea;"></div>
<div class="t" style="left:421px;top:399px;width:38px;height:16px;line-height:16px;text-align:right;padding:0 1.4px 0 2px;color:#161616;border-right:1px solid #d3dcea;border-bottom:1px solid #d3dcea;"></div>
<div class="t" style="left:459px;top:399px;width:37px;height:16px;line-height:16px;text-align:right;padding:0 1.4px 0 2px;color:#161616;border-right:1px solid #d3dcea;border-bottom:1px solid #d3dcea;"></div>
<div class="t" style="left:496px;top:399px;width:37px;height:16px;line-height:16px;text-align:right;padding:0 1.4px 0 2px;color:#161616;border-right:1px solid #d3dcea;border-bottom:1px solid #d3dcea;"></div>
<div class="t" style="left:533px;top:399px;width:37px;height:16px;line-height:16px;text-align:right;padding:0 1.4px 0 2px;color:#161616;border-right:1px solid #d3dcea;border-bottom:1px solid #d3dcea;"></div>
<div class="t" style="left:570px;top:399px;width:38px;height:16px;line-height:16px;text-align:right;padding:0 1.4px 0 2px;color:#161616;border-right:1px solid #d3dcea;border-bottom:1px solid #d3dcea;"></div>
<div class="t" style="left:608px;top:399px;width:42px;height:16px;line-height:16px;text-align:right;padding:0 1.4px 0 2px;color:#161616;border-right:1px solid #d3dcea;border-bottom:1px solid #d3dcea;"></div>
<div class="t" style="left:-7px;top:415px;width:39px;height:16px;line-height:16px;text-align:right;padding:0 1.4px 0 2px;color:#161616;border-right:1px solid #d3dcea;border-bottom:1px solid #d3dcea;">-9.42</div>
<div class="t" style="left:32px;top:415px;width:40px;height:16px;line-height:16px;text-align:right;padding:0 1.4px 0 2px;color:#161616;border-right:1px solid #d3dcea;border-bottom:1px solid #d3dcea;">0.03</div>
<div class="t" style="left:72px;top:415px;width:39px;height:16px;line-height:16px;text-align:right;padding:0 1.4px 0 2px;color:#161616;border-right:1px solid #d3dcea;border-bottom:1px solid #d3dcea;">-0.37</div>
<div class="t" style="left:111px;top:415px;width:39px;height:16px;line-height:16px;text-align:right;padding:0 1.4px 0 2px;color:#161616;border-right:1px solid #d3dcea;border-bottom:1px solid #d3dcea;">470.07</div>
<div class="t" style="left:150px;top:415px;width:39px;height:16px;line-height:16px;text-align:right;padding:0 1.4px 0 2px;color:#161616;border-right:1px solid #d3dcea;border-bottom:1px solid #d3dcea;"></div>
<div class="t" style="left:189px;top:415px;width:38px;height:16px;line-height:16px;text-align:right;padding:0 1.4px 0 2px;color:#161616;border-right:1px solid #d3dcea;border-bottom:1px solid #d3dcea;"></div>
<div class="t" style="left:227px;top:415px;width:40px;height:16px;line-height:16px;text-align:right;padding:0 1.4px 0 2px;color:#161616;border-right:1px solid #d3dcea;border-bottom:1px solid #d3dcea;"></div>
<div class="t" style="left:267px;top:415px;width:40px;height:16px;line-height:16px;text-align:right;padding:0 1.4px 0 2px;color:#161616;border-right:1px solid #d3dcea;border-bottom:1px solid #d3dcea;"></div>
<div class="t" style="left:311px;top:415px;width:37px;height:16px;line-height:16px;text-align:right;padding:0 1.4px 0 2px;color:#161616;border-right:1px solid #d3dcea;border-bottom:1px solid #d3dcea;">29.50</div>
<div class="t" style="left:348px;top:415px;width:36px;height:16px;line-height:16px;text-align:right;padding:0 1.4px 0 2px;color:#161616;border-right:1px solid #d3dcea;border-bottom:1px solid #d3dcea;">-10.76</div>
<div class="t" style="left:384px;top:415px;width:37px;height:16px;line-height:16px;text-align:right;padding:0 1.4px 0 2px;color:#161616;border-right:1px solid #d3dcea;border-bottom:1px solid #d3dcea;">0.03</div>
<div class="t" style="left:421px;top:415px;width:38px;height:16px;line-height:16px;text-align:right;padding:0 1.4px 0 2px;color:#161616;border-right:1px solid #d3dcea;border-bottom:1px solid #d3dcea;">-0.36</div>
<div class="t" style="left:459px;top:415px;width:37px;height:16px;line-height:16px;text-align:right;padding:0 1.4px 0 2px;color:#161616;border-right:1px solid #d3dcea;border-bottom:1px solid #d3dcea;">564.97</div>
<div class="t" style="left:496px;top:415px;width:37px;height:16px;line-height:16px;text-align:right;padding:0 1.4px 0 2px;color:#161616;border-right:1px solid #d3dcea;border-bottom:1px solid #d3dcea;"></div>
<div class="t" style="left:533px;top:415px;width:37px;height:16px;line-height:16px;text-align:right;padding:0 1.4px 0 2px;color:#161616;border-right:1px solid #d3dcea;border-bottom:1px solid #d3dcea;"></div>
<div class="t" style="left:570px;top:415px;width:38px;height:16px;line-height:16px;text-align:right;padding:0 1.4px 0 2px;color:#161616;border-right:1px solid #d3dcea;border-bottom:1px solid #d3dcea;"></div>
<div class="t" style="left:608px;top:415px;width:42px;height:16px;line-height:16px;text-align:right;padding:0 1.4px 0 2px;color:#161616;border-right:1px solid #d3dcea;border-bottom:1px solid #d3dcea;"></div>
<div class="t" style="left:-7px;top:431px;width:39px;height:16px;line-height:16px;text-align:right;padding:0 1.4px 0 2px;color:#161616;border-right:1px solid #d3dcea;border-bottom:1px solid #d3dcea;">-9.30</div>
<div class="t" style="left:32px;top:431px;width:40px;height:16px;line-height:16px;text-align:right;padding:0 1.4px 0 2px;color:#161616;border-right:1px solid #d3dcea;border-bottom:1px solid #d3dcea;">0.03</div>
<div class="t" style="left:72px;top:431px;width:39px;height:16px;line-height:16px;text-align:right;padding:0 1.4px 0 2px;color:#161616;border-right:1px solid #d3dcea;border-bottom:1px solid #d3dcea;">-0.37</div>
<div class="t" style="left:111px;top:431px;width:39px;height:16px;line-height:16px;text-align:right;padding:0 1.4px 0 2px;color:#161616;border-right:1px solid #d3dcea;border-bottom:1px solid #d3dcea;">465.44</div>
<div class="t" style="left:150px;top:431px;width:39px;height:16px;line-height:16px;text-align:right;padding:0 1.4px 0 2px;color:#161616;border-right:1px solid #d3dcea;border-bottom:1px solid #d3dcea;"></div>
<div class="t" style="left:189px;top:431px;width:38px;height:16px;line-height:16px;text-align:right;padding:0 1.4px 0 2px;color:#161616;border-right:1px solid #d3dcea;border-bottom:1px solid #d3dcea;"></div>
<div class="t" style="left:227px;top:431px;width:40px;height:16px;line-height:16px;text-align:right;padding:0 1.4px 0 2px;color:#161616;border-right:1px solid #d3dcea;border-bottom:1px solid #d3dcea;"></div>
<div class="t" style="left:267px;top:431px;width:40px;height:16px;line-height:16px;text-align:right;padding:0 1.4px 0 2px;color:#161616;border-right:1px solid #d3dcea;border-bottom:1px solid #d3dcea;"></div>
<div class="t" style="left:311px;top:431px;width:37px;height:16px;line-height:16px;text-align:right;padding:0 1.4px 0 2px;color:#161616;border-right:1px solid #d3dcea;border-bottom:1px solid #d3dcea;"></div>
<div class="t" style="left:348px;top:431px;width:36px;height:16px;line-height:16px;text-align:right;padding:0 1.4px 0 2px;color:#161616;border-right:1px solid #d3dcea;border-bottom:1px solid #d3dcea;"></div>
<div class="t" style="left:384px;top:431px;width:37px;height:16px;line-height:16px;text-align:right;padding:0 1.4px 0 2px;color:#161616;border-right:1px solid #d3dcea;border-bottom:1px solid #d3dcea;"></div>
<div class="t" style="left:421px;top:431px;width:38px;height:16px;line-height:16px;text-align:right;padding:0 1.4px 0 2px;color:#161616;border-right:1px solid #d3dcea;border-bottom:1px solid #d3dcea;"></div>
<div class="t" style="left:459px;top:431px;width:37px;height:16px;line-height:16px;text-align:right;padding:0 1.4px 0 2px;color:#161616;border-right:1px solid #d3dcea;border-bottom:1px solid #d3dcea;"></div>
<div class="t" style="left:496px;top:431px;width:37px;height:16px;line-height:16px;text-align:right;padding:0 1.4px 0 2px;color:#161616;border-right:1px solid #d3dcea;border-bottom:1px solid #d3dcea;"></div>
<div class="t" style="left:533px;top:431px;width:37px;height:16px;line-height:16px;text-align:right;padding:0 1.4px 0 2px;color:#161616;border-right:1px solid #d3dcea;border-bottom:1px solid #d3dcea;"></div>
<div class="t" style="left:570px;top:431px;width:38px;height:16px;line-height:16px;text-align:right;padding:0 1.4px 0 2px;color:#161616;border-right:1px solid #d3dcea;border-bottom:1px solid #d3dcea;"></div>
<div class="t" style="left:608px;top:431px;width:42px;height:16px;line-height:16px;text-align:right;padding:0 1.4px 0 2px;color:#161616;border-right:1px solid #d3dcea;border-bottom:1px solid #d3dcea;"></div>
<div class="t" style="left:-7px;top:447px;width:39px;height:15px;line-height:15px;text-align:right;padding:0 1.4px 0 2px;color:#161616;border-right:1px solid #d3dcea;border-bottom:1px solid #d3dcea;">-9.18</div>
<div class="t" style="left:32px;top:447px;width:40px;height:15px;line-height:15px;text-align:right;padding:0 1.4px 0 2px;color:#161616;border-right:1px solid #d3dcea;border-bottom:1px solid #d3dcea;">0.03</div>
<div class="t" style="left:72px;top:447px;width:39px;height:15px;line-height:15px;text-align:right;padding:0 1.4px 0 2px;color:#161616;border-right:1px solid #d3dcea;border-bottom:1px solid #d3dcea;">-0.37</div>
<div class="t" style="left:111px;top:447px;width:39px;height:15px;line-height:15px;text-align:right;padding:0 1.4px 0 2px;color:#161616;border-right:1px solid #d3dcea;border-bottom:1px solid #d3dcea;">461.26</div>
<div class="t" style="left:150px;top:447px;width:39px;height:15px;line-height:15px;text-align:right;padding:0 1.4px 0 2px;color:#161616;border-right:1px solid #d3dcea;border-bottom:1px solid #d3dcea;"></div>
<div class="t" style="left:189px;top:447px;width:38px;height:15px;line-height:15px;text-align:right;padding:0 1.4px 0 2px;color:#161616;border-right:1px solid #d3dcea;border-bottom:1px solid #d3dcea;"></div>
<div class="t" style="left:227px;top:447px;width:40px;height:15px;line-height:15px;text-align:right;padding:0 1.4px 0 2px;color:#161616;border-right:1px solid #d3dcea;border-bottom:1px solid #d3dcea;"></div>
<div class="t" style="left:267px;top:447px;width:40px;height:15px;line-height:15px;text-align:right;padding:0 1.4px 0 2px;color:#161616;border-right:1px solid #d3dcea;border-bottom:1px solid #d3dcea;"></div>
<div class="t" style="left:311px;top:447px;width:37px;height:15px;line-height:15px;text-align:right;padding:0 1.4px 0 2px;color:#161616;border-right:1px solid #d3dcea;border-bottom:1px solid #d3dcea;">28.90</div>
<div class="t" style="left:348px;top:447px;width:36px;height:15px;line-height:15px;text-align:right;padding:0 1.4px 0 2px;color:#161616;border-right:1px solid #d3dcea;border-bottom:1px solid #d3dcea;">-10.53</div>
<div class="t" style="left:384px;top:447px;width:37px;height:15px;line-height:15px;text-align:right;padding:0 1.4px 0 2px;color:#161616;border-right:1px solid #d3dcea;border-bottom:1px solid #d3dcea;">0.03</div>
<div class="t" style="left:421px;top:447px;width:38px;height:15px;line-height:15px;text-align:right;padding:0 1.4px 0 2px;color:#161616;border-right:1px solid #d3dcea;border-bottom:1px solid #d3dcea;">-0.36</div>
<div class="t" style="left:459px;top:447px;width:37px;height:15px;line-height:15px;text-align:right;padding:0 1.4px 0 2px;color:#161616;border-right:1px solid #d3dcea;border-bottom:1px solid #d3dcea;">555.92</div>
<div class="t" style="left:496px;top:447px;width:37px;height:15px;line-height:15px;text-align:right;padding:0 1.4px 0 2px;color:#161616;border-right:1px solid #d3dcea;border-bottom:1px solid #d3dcea;"></div>
<div class="t" style="left:533px;top:447px;width:37px;height:15px;line-height:15px;text-align:right;padding:0 1.4px 0 2px;color:#161616;border-right:1px solid #d3dcea;border-bottom:1px solid #d3dcea;"></div>
<div class="t" style="left:570px;top:447px;width:38px;height:15px;line-height:15px;text-align:right;padding:0 1.4px 0 2px;color:#161616;border-right:1px solid #d3dcea;border-bottom:1px solid #d3dcea;"></div>
<div class="t" style="left:608px;top:447px;width:42px;height:15px;line-height:15px;text-align:right;padding:0 1.4px 0 2px;color:#161616;border-right:1px solid #d3dcea;border-bottom:1px solid #d3dcea;"></div>
<div class="t" style="left:-7px;top:462px;width:39px;height:16px;line-height:16px;text-align:right;padding:0 1.4px 0 2px;color:#161616;border-right:1px solid #d3dcea;border-bottom:1px solid #d3dcea;">-9.07</div>
<div class="t" style="left:32px;top:462px;width:40px;height:16px;line-height:16px;text-align:right;padding:0 1.4px 0 2px;color:#161616;border-right:1px solid #d3dcea;border-bottom:1px solid #d3dcea;">0.03</div>
<div class="t" style="left:72px;top:462px;width:39px;height:16px;line-height:16px;text-align:right;padding:0 1.4px 0 2px;color:#161616;border-right:1px solid #d3dcea;border-bottom:1px solid #d3dcea;">-0.36</div>
<div class="t" style="left:111px;top:462px;width:39px;height:16px;line-height:16px;text-align:right;padding:0 1.4px 0 2px;color:#161616;border-right:1px solid #d3dcea;border-bottom:1px solid #d3dcea;">457.10</div>
<div class="t" style="left:150px;top:462px;width:39px;height:16px;line-height:16px;text-align:right;padding:0 1.4px 0 2px;color:#161616;border-right:1px solid #d3dcea;border-bottom:1px solid #d3dcea;"></div>
<div class="t" style="left:189px;top:462px;width:38px;height:16px;line-height:16px;text-align:right;padding:0 1.4px 0 2px;color:#161616;border-right:1px solid #d3dcea;border-bottom:1px solid #d3dcea;"></div>
<div class="t" style="left:227px;top:462px;width:40px;height:16px;line-height:16px;text-align:right;padding:0 1.4px 0 2px;color:#161616;border-right:1px solid #d3dcea;border-bottom:1px solid #d3dcea;"></div>
<div class="t" style="left:267px;top:462px;width:40px;height:16px;line-height:16px;text-align:right;padding:0 1.4px 0 2px;color:#161616;border-right:1px solid #d3dcea;border-bottom:1px solid #d3dcea;"></div>
<div class="t" style="left:311px;top:462px;width:37px;height:16px;line-height:16px;text-align:right;padding:0 1.4px 0 2px;color:#161616;border-right:1px solid #d3dcea;border-bottom:1px solid #d3dcea;"></div>
<div class="t" style="left:348px;top:462px;width:36px;height:16px;line-height:16px;text-align:right;padding:0 1.4px 0 2px;color:#161616;border-right:1px solid #d3dcea;border-bottom:1px solid #d3dcea;"></div>
<div class="t" style="left:384px;top:462px;width:37px;height:16px;line-height:16px;text-align:right;padding:0 1.4px 0 2px;color:#161616;border-right:1px solid #d3dcea;border-bottom:1px solid #d3dcea;"></div>
<div class="t" style="left:421px;top:462px;width:38px;height:16px;line-height:16px;text-align:right;padding:0 1.4px 0 2px;color:#161616;border-right:1px solid #d3dcea;border-bottom:1px solid #d3dcea;"></div>
<div class="t" style="left:459px;top:462px;width:37px;height:16px;line-height:16px;text-align:right;padding:0 1.4px 0 2px;color:#161616;border-right:1px solid #d3dcea;border-bottom:1px solid #d3dcea;"></div>
<div class="t" style="left:496px;top:462px;width:37px;height:16px;line-height:16px;text-align:right;padding:0 1.4px 0 2px;color:#161616;border-right:1px solid #d3dcea;border-bottom:1px solid #d3dcea;"></div>
<div class="t" style="left:533px;top:462px;width:37px;height:16px;line-height:16px;text-align:right;padding:0 1.4px 0 2px;color:#161616;border-right:1px solid #d3dcea;border-bottom:1px solid #d3dcea;"></div>
<div class="t" style="left:570px;top:462px;width:38px;height:16px;line-height:16px;text-align:right;padding:0 1.4px 0 2px;color:#161616;border-right:1px solid #d3dcea;border-bottom:1px solid #d3dcea;"></div>
<div class="t" style="left:608px;top:462px;width:42px;height:16px;line-height:16px;text-align:right;padding:0 1.4px 0 2px;color:#161616;border-right:1px solid #d3dcea;border-bottom:1px solid #d3dcea;"></div>
<div class="t" style="left:-7px;top:478px;width:39px;height:16px;line-height:16px;text-align:right;padding:0 1.4px 0 2px;color:#161616;border-right:1px solid #d3dcea;border-bottom:1px solid #d3dcea;">-8.95</div>
<div class="t" style="left:32px;top:478px;width:40px;height:16px;line-height:16px;text-align:right;padding:0 1.4px 0 2px;color:#161616;border-right:1px solid #d3dcea;border-bottom:1px solid #d3dcea;">0.03</div>
<div class="t" style="left:72px;top:478px;width:39px;height:16px;line-height:16px;text-align:right;padding:0 1.4px 0 2px;color:#161616;border-right:1px solid #d3dcea;border-bottom:1px solid #d3dcea;">-0.36</div>
<div class="t" style="left:111px;top:478px;width:39px;height:16px;line-height:16px;text-align:right;padding:0 1.4px 0 2px;color:#161616;border-right:1px solid #d3dcea;border-bottom:1px solid #d3dcea;">452.47</div>
<div class="t" style="left:150px;top:478px;width:39px;height:16px;line-height:16px;text-align:right;padding:0 1.4px 0 2px;color:#161616;border-right:1px solid #d3dcea;border-bottom:1px solid #d3dcea;"></div>
<div class="t" style="left:189px;top:478px;width:38px;height:16px;line-height:16px;text-align:right;padding:0 1.4px 0 2px;color:#161616;border-right:1px solid #d3dcea;border-bottom:1px solid #d3dcea;"></div>
<div class="t" style="left:227px;top:478px;width:40px;height:16px;line-height:16px;text-align:right;padding:0 1.4px 0 2px;color:#161616;border-right:1px solid #d3dcea;border-bottom:1px solid #d3dcea;"></div>
<div class="t" style="left:267px;top:478px;width:40px;height:16px;line-height:16px;text-align:right;padding:0 1.4px 0 2px;color:#161616;border-right:1px solid #d3dcea;border-bottom:1px solid #d3dcea;"></div>
<div class="t" style="left:311px;top:478px;width:37px;height:16px;line-height:16px;text-align:right;padding:0 1.4px 0 2px;color:#161616;border-right:1px solid #d3dcea;border-bottom:1px solid #d3dcea;">28.30</div>
<div class="t" style="left:348px;top:478px;width:36px;height:16px;line-height:16px;text-align:right;padding:0 1.4px 0 2px;color:#161616;border-right:1px solid #d3dcea;border-bottom:1px solid #d3dcea;">-10.29</div>
<div class="t" style="left:384px;top:478px;width:37px;height:16px;line-height:16px;text-align:right;padding:0 1.4px 0 2px;color:#161616;border-right:1px solid #d3dcea;border-bottom:1px solid #d3dcea;">0.03</div>
<div class="t" style="left:421px;top:478px;width:38px;height:16px;line-height:16px;text-align:right;padding:0 1.4px 0 2px;color:#161616;border-right:1px solid #d3dcea;border-bottom:1px solid #d3dcea;">-0.36</div>
<div class="t" style="left:459px;top:478px;width:37px;height:16px;line-height:16px;text-align:right;padding:0 1.4px 0 2px;color:#161616;border-right:1px solid #d3dcea;border-bottom:1px solid #d3dcea;">546.89</div>
<div class="t" style="left:496px;top:478px;width:37px;height:16px;line-height:16px;text-align:right;padding:0 1.4px 0 2px;color:#161616;border-right:1px solid #d3dcea;border-bottom:1px solid #d3dcea;"></div>
<div class="t" style="left:533px;top:478px;width:37px;height:16px;line-height:16px;text-align:right;padding:0 1.4px 0 2px;color:#161616;border-right:1px solid #d3dcea;border-bottom:1px solid #d3dcea;"></div>
<div class="t" style="left:570px;top:478px;width:38px;height:16px;line-height:16px;text-align:right;padding:0 1.4px 0 2px;color:#161616;border-right:1px solid #d3dcea;border-bottom:1px solid #d3dcea;"></div>
<div class="t" style="left:608px;top:478px;width:42px;height:16px;line-height:16px;text-align:right;padding:0 1.4px 0 2px;color:#161616;border-right:1px solid #d3dcea;border-bottom:1px solid #d3dcea;"></div>
<div class="t" style="left:-7px;top:494px;width:39px;height:16px;line-height:16px;text-align:right;padding:0 1.4px 0 2px;color:#161616;border-right:1px solid #d3dcea;border-bottom:1px solid #d3dcea;">-8.85</div>
<div class="t" style="left:32px;top:494px;width:40px;height:16px;line-height:16px;text-align:right;padding:0 1.4px 0 2px;color:#161616;border-right:1px solid #d3dcea;border-bottom:1px solid #d3dcea;">0.03</div>
<div class="t" style="left:72px;top:494px;width:39px;height:16px;line-height:16px;text-align:right;padding:0 1.4px 0 2px;color:#161616;border-right:1px solid #d3dcea;border-bottom:1px solid #d3dcea;">-0.36</div>
<div class="t" style="left:111px;top:494px;width:39px;height:16px;line-height:16px;text-align:right;padding:0 1.4px 0 2px;color:#161616;border-right:1px solid #d3dcea;border-bottom:1px solid #d3dcea;">448.78</div>
<div class="t" style="left:150px;top:494px;width:39px;height:16px;line-height:16px;text-align:right;padding:0 1.4px 0 2px;color:#161616;border-right:1px solid #d3dcea;border-bottom:1px solid #d3dcea;"></div>
<div class="t" style="left:189px;top:494px;width:38px;height:16px;line-height:16px;text-align:right;padding:0 1.4px 0 2px;color:#161616;border-right:1px solid #d3dcea;border-bottom:1px solid #d3dcea;"></div>
<div class="t" style="left:227px;top:494px;width:40px;height:16px;line-height:16px;text-align:right;padding:0 1.4px 0 2px;color:#161616;border-right:1px solid #d3dcea;border-bottom:1px solid #d3dcea;"></div>
<div class="t" style="left:267px;top:494px;width:40px;height:16px;line-height:16px;text-align:right;padding:0 1.4px 0 2px;color:#161616;border-right:1px solid #d3dcea;border-bottom:1px solid #d3dcea;"></div>
<div class="t" style="left:311px;top:494px;width:37px;height:16px;line-height:16px;text-align:right;padding:0 1.4px 0 2px;color:#161616;border-right:1px solid #d3dcea;border-bottom:1px solid #d3dcea;">28.00</div>
<div class="t" style="left:348px;top:494px;width:36px;height:16px;line-height:16px;text-align:right;padding:0 1.4px 0 2px;color:#161616;border-right:1px solid #d3dcea;border-bottom:1px solid #d3dcea;">-10.17</div>
<div class="t" style="left:384px;top:494px;width:37px;height:16px;line-height:16px;text-align:right;padding:0 1.4px 0 2px;color:#161616;border-right:1px solid #d3dcea;border-bottom:1px solid #d3dcea;">0.03</div>
<div class="t" style="left:421px;top:494px;width:38px;height:16px;line-height:16px;text-align:right;padding:0 1.4px 0 2px;color:#161616;border-right:1px solid #d3dcea;border-bottom:1px solid #d3dcea;">-0.36</div>
<div class="t" style="left:459px;top:494px;width:37px;height:16px;line-height:16px;text-align:right;padding:0 1.4px 0 2px;color:#161616;border-right:1px solid #d3dcea;border-bottom:1px solid #d3dcea;">542.38</div>
<div class="t" style="left:496px;top:494px;width:37px;height:16px;line-height:16px;text-align:right;padding:0 1.4px 0 2px;color:#161616;border-right:1px solid #d3dcea;border-bottom:1px solid #d3dcea;"></div>
<div class="t" style="left:533px;top:494px;width:37px;height:16px;line-height:16px;text-align:right;padding:0 1.4px 0 2px;color:#161616;border-right:1px solid #d3dcea;border-bottom:1px solid #d3dcea;"></div>
<div class="t" style="left:570px;top:494px;width:38px;height:16px;line-height:16px;text-align:right;padding:0 1.4px 0 2px;color:#161616;border-right:1px solid #d3dcea;border-bottom:1px solid #d3dcea;"></div>
<div class="t" style="left:608px;top:494px;width:42px;height:16px;line-height:16px;text-align:right;padding:0 1.4px 0 2px;color:#161616;border-right:1px solid #d3dcea;border-bottom:1px solid #d3dcea;"></div>
<div class="t" style="left:-7px;top:510px;width:39px;height:16px;line-height:16px;text-align:right;padding:0 1.4px 0 2px;color:#161616;border-right:1px solid #d3dcea;border-bottom:1px solid #d3dcea;">-8.74</div>
<div class="t" style="left:32px;top:510px;width:40px;height:16px;line-height:16px;text-align:right;padding:0 1.4px 0 2px;color:#161616;border-right:1px solid #d3dcea;border-bottom:1px solid #d3dcea;">0.03</div>
<div class="t" style="left:72px;top:510px;width:39px;height:16px;line-height:16px;text-align:right;padding:0 1.4px 0 2px;color:#161616;border-right:1px solid #d3dcea;border-bottom:1px solid #d3dcea;">-0.36</div>
<div class="t" style="left:111px;top:510px;width:39px;height:16px;line-height:16px;text-align:right;padding:0 1.4px 0 2px;color:#161616;border-right:1px solid #d3dcea;border-bottom:1px solid #d3dcea;">444.62</div>
<div class="t" style="left:150px;top:510px;width:39px;height:16px;line-height:16px;text-align:right;padding:0 1.4px 0 2px;color:#161616;border-right:1px solid #d3dcea;border-bottom:1px solid #d3dcea;"></div>
<div class="t" style="left:189px;top:510px;width:38px;height:16px;line-height:16px;text-align:right;padding:0 1.4px 0 2px;color:#161616;border-right:1px solid #d3dcea;border-bottom:1px solid #d3dcea;"></div>
<div class="t" style="left:227px;top:510px;width:40px;height:16px;line-height:16px;text-align:right;padding:0 1.4px 0 2px;color:#161616;border-right:1px solid #d3dcea;border-bottom:1px solid #d3dcea;"></div>
<div class="t" style="left:267px;top:510px;width:40px;height:16px;line-height:16px;text-align:right;padding:0 1.4px 0 2px;color:#161616;border-right:1px solid #d3dcea;border-bottom:1px solid #d3dcea;"></div>
<div class="t" style="left:311px;top:510px;width:37px;height:16px;line-height:16px;text-align:right;padding:0 1.4px 0 2px;color:#161616;border-right:1px solid #d3dcea;border-bottom:1px solid #d3dcea;">27.70</div>
<div class="t" style="left:348px;top:510px;width:36px;height:16px;line-height:16px;text-align:right;padding:0 1.4px 0 2px;color:#161616;border-right:1px solid #d3dcea;border-bottom:1px solid #d3dcea;">-10.06</div>
<div class="t" style="left:384px;top:510px;width:37px;height:16px;line-height:16px;text-align:right;padding:0 1.4px 0 2px;color:#161616;border-right:1px solid #d3dcea;border-bottom:1px solid #d3dcea;">0.03</div>
<div class="t" style="left:421px;top:510px;width:38px;height:16px;line-height:16px;text-align:right;padding:0 1.4px 0 2px;color:#161616;border-right:1px solid #d3dcea;border-bottom:1px solid #d3dcea;">-0.35</div>
<div class="t" style="left:459px;top:510px;width:37px;height:16px;line-height:16px;text-align:right;padding:0 1.4px 0 2px;color:#161616;border-right:1px solid #d3dcea;border-bottom:1px solid #d3dcea;">537.88</div>
<div class="t" style="left:496px;top:510px;width:37px;height:16px;line-height:16px;text-align:right;padding:0 1.4px 0 2px;color:#161616;border-right:1px solid #d3dcea;border-bottom:1px solid #d3dcea;"></div>
<div class="t" style="left:533px;top:510px;width:37px;height:16px;line-height:16px;text-align:right;padding:0 1.4px 0 2px;color:#161616;border-right:1px solid #d3dcea;border-bottom:1px solid #d3dcea;"></div>
<div class="t" style="left:570px;top:510px;width:38px;height:16px;line-height:16px;text-align:right;padding:0 1.4px 0 2px;color:#161616;border-right:1px solid #d3dcea;border-bottom:1px solid #d3dcea;"></div>
<div class="t" style="left:608px;top:510px;width:42px;height:16px;line-height:16px;text-align:right;padding:0 1.4px 0 2px;color:#161616;border-right:1px solid #d3dcea;border-bottom:1px solid #d3dcea;"></div>
<div class="t" style="left:-7px;top:526px;width:39px;height:15px;line-height:15px;text-align:right;padding:0 1.4px 0 2px;color:#161616;border-right:1px solid #d3dcea;border-bottom:1px solid #d3dcea;">-8.63</div>
<div class="t" style="left:32px;top:526px;width:40px;height:15px;line-height:15px;text-align:right;padding:0 1.4px 0 2px;color:#161616;border-right:1px solid #d3dcea;border-bottom:1px solid #d3dcea;">0.03</div>
<div class="t" style="left:72px;top:526px;width:39px;height:15px;line-height:15px;text-align:right;padding:0 1.4px 0 2px;color:#161616;border-right:1px solid #d3dcea;border-bottom:1px solid #d3dcea;">-0.36</div>
<div class="t" style="left:111px;top:526px;width:39px;height:15px;line-height:15px;text-align:right;padding:0 1.4px 0 2px;color:#161616;border-right:1px solid #d3dcea;border-bottom:1px solid #d3dcea;">440.48</div>
<div class="t" style="left:150px;top:526px;width:39px;height:15px;line-height:15px;text-align:right;padding:0 1.4px 0 2px;color:#161616;border-right:1px solid #d3dcea;border-bottom:1px solid #d3dcea;"></div>
<div class="t" style="left:189px;top:526px;width:38px;height:15px;line-height:15px;text-align:right;padding:0 1.4px 0 2px;color:#161616;border-right:1px solid #d3dcea;border-bottom:1px solid #d3dcea;"></div>
<div class="t" style="left:227px;top:526px;width:40px;height:15px;line-height:15px;text-align:right;padding:0 1.4px 0 2px;color:#161616;border-right:1px solid #d3dcea;border-bottom:1px solid #d3dcea;"></div>
<div class="t" style="left:267px;top:526px;width:40px;height:15px;line-height:15px;text-align:right;padding:0 1.4px 0 2px;color:#161616;border-right:1px solid #d3dcea;border-bottom:1px solid #d3dcea;"></div>
<div class="t" style="left:311px;top:526px;width:37px;height:15px;line-height:15px;text-align:right;padding:0 1.4px 0 2px;color:#161616;border-right:1px solid #d3dcea;border-bottom:1px solid #d3dcea;"></div>
<div class="t" style="left:348px;top:526px;width:36px;height:15px;line-height:15px;text-align:right;padding:0 1.4px 0 2px;color:#161616;border-right:1px solid #d3dcea;border-bottom:1px solid #d3dcea;"></div>
<div class="t" style="left:384px;top:526px;width:37px;height:15px;line-height:15px;text-align:right;padding:0 1.4px 0 2px;color:#161616;border-right:1px solid #d3dcea;border-bottom:1px solid #d3dcea;"></div>
<div class="t" style="left:421px;top:526px;width:38px;height:15px;line-height:15px;text-align:right;padding:0 1.4px 0 2px;color:#161616;border-right:1px solid #d3dcea;border-bottom:1px solid #d3dcea;"></div>
<div class="t" style="left:459px;top:526px;width:37px;height:15px;line-height:15px;text-align:right;padding:0 1.4px 0 2px;color:#161616;border-right:1px solid #d3dcea;border-bottom:1px solid #d3dcea;"></div>
<div class="t" style="left:496px;top:526px;width:37px;height:15px;line-height:15px;text-align:right;padding:0 1.4px 0 2px;color:#161616;border-right:1px solid #d3dcea;border-bottom:1px solid #d3dcea;"></div>
<div class="t" style="left:533px;top:526px;width:37px;height:15px;line-height:15px;text-align:right;padding:0 1.4px 0 2px;color:#161616;border-right:1px solid #d3dcea;border-bottom:1px solid #d3dcea;"></div>
<div class="t" style="left:570px;top:526px;width:38px;height:15px;line-height:15px;text-align:right;padding:0 1.4px 0 2px;color:#161616;border-right:1px solid #d3dcea;border-bottom:1px solid #d3dcea;"></div>
<div class="t" style="left:608px;top:526px;width:42px;height:15px;line-height:15px;text-align:right;padding:0 1.4px 0 2px;color:#161616;border-right:1px solid #d3dcea;border-bottom:1px solid #d3dcea;"></div>
<div class="t" style="left:-7px;top:541px;width:39px;height:16px;line-height:16px;text-align:right;padding:0 1.4px 0 2px;color:#161616;border-right:1px solid #d3dcea;border-bottom:1px solid #d3dcea;">-8.54</div>
<div class="t" style="left:32px;top:541px;width:40px;height:16px;line-height:16px;text-align:right;padding:0 1.4px 0 2px;color:#161616;border-right:1px solid #d3dcea;border-bottom:1px solid #d3dcea;">0.03</div>
<div class="t" style="left:72px;top:541px;width:39px;height:16px;line-height:16px;text-align:right;padding:0 1.4px 0 2px;color:#161616;border-right:1px solid #d3dcea;border-bottom:1px solid #d3dcea;">-0.36</div>
<div class="t" style="left:111px;top:541px;width:39px;height:16px;line-height:16px;text-align:right;padding:0 1.4px 0 2px;color:#161616;border-right:1px solid #d3dcea;border-bottom:1px solid #d3dcea;">436.81</div>
<div class="t" style="left:150px;top:541px;width:39px;height:16px;line-height:16px;text-align:right;padding:0 1.4px 0 2px;color:#161616;border-right:1px solid #d3dcea;border-bottom:1px solid #d3dcea;"></div>
<div class="t" style="left:189px;top:541px;width:38px;height:16px;line-height:16px;text-align:right;padding:0 1.4px 0 2px;color:#161616;border-right:1px solid #d3dcea;border-bottom:1px solid #d3dcea;"></div>
<div class="t" style="left:227px;top:541px;width:40px;height:16px;line-height:16px;text-align:right;padding:0 1.4px 0 2px;color:#161616;border-right:1px solid #d3dcea;border-bottom:1px solid #d3dcea;"></div>
<div class="t" style="left:267px;top:541px;width:40px;height:16px;line-height:16px;text-align:right;padding:0 1.4px 0 2px;color:#161616;border-right:1px solid #d3dcea;border-bottom:1px solid #d3dcea;"></div>
<div class="t" style="left:311px;top:541px;width:37px;height:16px;line-height:16px;text-align:right;padding:0 1.4px 0 2px;color:#161616;border-right:1px solid #d3dcea;border-bottom:1px solid #d3dcea;">27.15</div>
<div class="t" style="left:348px;top:541px;width:36px;height:16px;line-height:16px;text-align:right;padding:0 1.4px 0 2px;color:#161616;border-right:1px solid #d3dcea;border-bottom:1px solid #d3dcea;">-9.84</div>
<div class="t" style="left:384px;top:541px;width:37px;height:16px;line-height:16px;text-align:right;padding:0 1.4px 0 2px;color:#161616;border-right:1px solid #d3dcea;border-bottom:1px solid #d3dcea;">0.03</div>
<div class="t" style="left:421px;top:541px;width:38px;height:16px;line-height:16px;text-align:right;padding:0 1.4px 0 2px;color:#161616;border-right:1px solid #d3dcea;border-bottom:1px solid #d3dcea;">-0.35</div>
<div class="t" style="left:459px;top:541px;width:37px;height:16px;line-height:16px;text-align:right;padding:0 1.4px 0 2px;color:#161616;border-right:1px solid #d3dcea;border-bottom:1px solid #d3dcea;">529.29</div>
<div class="t" style="left:496px;top:541px;width:37px;height:16px;line-height:16px;text-align:right;padding:0 1.4px 0 2px;color:#161616;border-right:1px solid #d3dcea;border-bottom:1px solid #d3dcea;"></div>
<div class="t" style="left:533px;top:541px;width:37px;height:16px;line-height:16px;text-align:right;padding:0 1.4px 0 2px;color:#161616;border-right:1px solid #d3dcea;border-bottom:1px solid #d3dcea;"></div>
<div class="t" style="left:570px;top:541px;width:38px;height:16px;line-height:16px;text-align:right;padding:0 1.4px 0 2px;color:#161616;border-right:1px solid #d3dcea;border-bottom:1px solid #d3dcea;"></div>
<div class="t" style="left:608px;top:541px;width:42px;height:16px;line-height:16px;text-align:right;padding:0 1.4px 0 2px;color:#161616;border-right:1px solid #d3dcea;border-bottom:1px solid #d3dcea;"></div>
<div class="t" style="left:-7px;top:557px;width:39px;height:16px;line-height:16px;text-align:right;padding:0 1.4px 0 2px;color:#161616;border-right:1px solid #d3dcea;border-bottom:1px solid #d3dcea;">-8.42</div>
<div class="t" style="left:32px;top:557px;width:40px;height:16px;line-height:16px;text-align:right;padding:0 1.4px 0 2px;color:#161616;border-right:1px solid #d3dcea;border-bottom:1px solid #d3dcea;">0.03</div>
<div class="t" style="left:72px;top:557px;width:39px;height:16px;line-height:16px;text-align:right;padding:0 1.4px 0 2px;color:#161616;border-right:1px solid #d3dcea;border-bottom:1px solid #d3dcea;">-0.35</div>
<div class="t" style="left:111px;top:557px;width:39px;height:16px;line-height:16px;text-align:right;padding:0 1.4px 0 2px;color:#161616;border-right:1px solid #d3dcea;border-bottom:1px solid #d3dcea;">432.20</div>
<div class="t" style="left:150px;top:557px;width:39px;height:16px;line-height:16px;text-align:right;padding:0 1.4px 0 2px;color:#161616;border-right:1px solid #d3dcea;border-bottom:1px solid #d3dcea;"></div>
<div class="t" style="left:189px;top:557px;width:38px;height:16px;line-height:16px;text-align:right;padding:0 1.4px 0 2px;color:#161616;border-right:1px solid #d3dcea;border-bottom:1px solid #d3dcea;"></div>
<div class="t" style="left:227px;top:557px;width:40px;height:16px;line-height:16px;text-align:right;padding:0 1.4px 0 2px;color:#161616;border-right:1px solid #d3dcea;border-bottom:1px solid #d3dcea;"></div>
<div class="t" style="left:267px;top:557px;width:40px;height:16px;line-height:16px;text-align:right;padding:0 1.4px 0 2px;color:#161616;border-right:1px solid #d3dcea;border-bottom:1px solid #d3dcea;"></div>
<div class="t" style="left:311px;top:557px;width:37px;height:16px;line-height:16px;text-align:right;padding:0 1.4px 0 2px;color:#161616;border-right:1px solid #d3dcea;border-bottom:1px solid #d3dcea;"></div>
<div class="t" style="left:348px;top:557px;width:36px;height:16px;line-height:16px;text-align:right;padding:0 1.4px 0 2px;color:#161616;border-right:1px solid #d3dcea;border-bottom:1px solid #d3dcea;"></div>
<div class="t" style="left:384px;top:557px;width:37px;height:16px;line-height:16px;text-align:right;padding:0 1.4px 0 2px;color:#161616;border-right:1px solid #d3dcea;border-bottom:1px solid #d3dcea;"></div>
<div class="t" style="left:421px;top:557px;width:38px;height:16px;line-height:16px;text-align:right;padding:0 1.4px 0 2px;color:#161616;border-right:1px solid #d3dcea;border-bottom:1px solid #d3dcea;"></div>
<div class="t" style="left:459px;top:557px;width:37px;height:16px;line-height:16px;text-align:right;padding:0 1.4px 0 2px;color:#161616;border-right:1px solid #d3dcea;border-bottom:1px solid #d3dcea;"></div>
<div class="t" style="left:496px;top:557px;width:37px;height:16px;line-height:16px;text-align:right;padding:0 1.4px 0 2px;color:#161616;border-right:1px solid #d3dcea;border-bottom:1px solid #d3dcea;"></div>
<div class="t" style="left:533px;top:557px;width:37px;height:16px;line-height:16px;text-align:right;padding:0 1.4px 0 2px;color:#161616;border-right:1px solid #d3dcea;border-bottom:1px solid #d3dcea;"></div>
<div class="t" style="left:570px;top:557px;width:38px;height:16px;line-height:16px;text-align:right;padding:0 1.4px 0 2px;color:#161616;border-right:1px solid #d3dcea;border-bottom:1px solid #d3dcea;"></div>
<div class="t" style="left:608px;top:557px;width:42px;height:16px;line-height:16px;text-align:right;padding:0 1.4px 0 2px;color:#161616;border-right:1px solid #d3dcea;border-bottom:1px solid #d3dcea;"></div>
<div class="t" style="left:-7px;top:573px;width:39px;height:16px;line-height:16px;text-align:right;padding:0 1.4px 0 2px;color:#161616;border-right:1px solid #d3dcea;border-bottom:1px solid #d3dcea;">-8.32</div>
<div class="t" style="left:32px;top:573px;width:40px;height:16px;line-height:16px;text-align:right;padding:0 1.4px 0 2px;color:#161616;border-right:1px solid #d3dcea;border-bottom:1px solid #d3dcea;">0.03</div>
<div class="t" style="left:72px;top:573px;width:39px;height:16px;line-height:16px;text-align:right;padding:0 1.4px 0 2px;color:#161616;border-right:1px solid #d3dcea;border-bottom:1px solid #d3dcea;">-0.35</div>
<div class="t" style="left:111px;top:573px;width:39px;height:16px;line-height:16px;text-align:right;padding:0 1.4px 0 2px;color:#161616;border-right:1px solid #d3dcea;border-bottom:1px solid #d3dcea;">428.54</div>
<div class="t" style="left:150px;top:573px;width:39px;height:16px;line-height:16px;text-align:right;padding:0 1.4px 0 2px;color:#161616;border-right:1px solid #d3dcea;border-bottom:1px solid #d3dcea;"></div>
<div class="t" style="left:189px;top:573px;width:38px;height:16px;line-height:16px;text-align:right;padding:0 1.4px 0 2px;color:#161616;border-right:1px solid #d3dcea;border-bottom:1px solid #d3dcea;"></div>
<div class="t" style="left:227px;top:573px;width:40px;height:16px;line-height:16px;text-align:right;padding:0 1.4px 0 2px;color:#161616;border-right:1px solid #d3dcea;border-bottom:1px solid #d3dcea;"></div>
<div class="t" style="left:267px;top:573px;width:40px;height:16px;line-height:16px;text-align:right;padding:0 1.4px 0 2px;color:#161616;border-right:1px solid #d3dcea;border-bottom:1px solid #d3dcea;"></div>
<div class="t" style="left:311px;top:573px;width:37px;height:16px;line-height:16px;text-align:right;padding:0 1.4px 0 2px;color:#161616;border-right:1px solid #d3dcea;border-bottom:1px solid #d3dcea;">26.60</div>
<div class="t" style="left:348px;top:573px;width:36px;height:16px;line-height:16px;text-align:right;padding:0 1.4px 0 2px;color:#161616;border-right:1px solid #d3dcea;border-bottom:1px solid #d3dcea;">-9.62</div>
<div class="t" style="left:384px;top:573px;width:37px;height:16px;line-height:16px;text-align:right;padding:0 1.4px 0 2px;color:#161616;border-right:1px solid #d3dcea;border-bottom:1px solid #d3dcea;">0.03</div>
<div class="t" style="left:421px;top:573px;width:38px;height:16px;line-height:16px;text-align:right;padding:0 1.4px 0 2px;color:#161616;border-right:1px solid #d3dcea;border-bottom:1px solid #d3dcea;">-0.35</div>
<div class="t" style="left:459px;top:573px;width:37px;height:16px;line-height:16px;text-align:right;padding:0 1.4px 0 2px;color:#161616;border-right:1px solid #d3dcea;border-bottom:1px solid #d3dcea;">520.73</div>
<div class="t" style="left:496px;top:573px;width:37px;height:16px;line-height:16px;text-align:right;padding:0 1.4px 0 2px;color:#161616;border-right:1px solid #d3dcea;border-bottom:1px solid #d3dcea;"></div>
<div class="t" style="left:533px;top:573px;width:37px;height:16px;line-height:16px;text-align:right;padding:0 1.4px 0 2px;color:#161616;border-right:1px solid #d3dcea;border-bottom:1px solid #d3dcea;"></div>
<div class="t" style="left:570px;top:573px;width:38px;height:16px;line-height:16px;text-align:right;padding:0 1.4px 0 2px;color:#161616;border-right:1px solid #d3dcea;border-bottom:1px solid #d3dcea;"></div>
<div class="t" style="left:608px;top:573px;width:42px;height:16px;line-height:16px;text-align:right;padding:0 1.4px 0 2px;color:#161616;border-right:1px solid #d3dcea;border-bottom:1px solid #d3dcea;"></div>
<div class="t" style="left:-7px;top:589px;width:39px;height:3px;line-height:3px;text-align:right;padding:0 1.4px 0 2px;color:#161616;border-right:1px solid #d3dcea;border-bottom:1px solid #d3dcea;"></div>
<div class="t" style="left:32px;top:589px;width:40px;height:3px;line-height:3px;text-align:right;padding:0 1.4px 0 2px;color:#161616;border-right:1px solid #d3dcea;border-bottom:1px solid #d3dcea;"></div>
<div class="t" style="left:72px;top:589px;width:39px;height:3px;line-height:3px;text-align:right;padding:0 1.4px 0 2px;color:#161616;border-right:1px solid #d3dcea;border-bottom:1px solid #d3dcea;"></div>
<div class="t" style="left:111px;top:589px;width:39px;height:3px;line-height:3px;text-align:right;padding:0 1.4px 0 2px;color:#161616;border-right:1px solid #d3dcea;border-bottom:1px solid #d3dcea;"></div>
<div class="t" style="left:150px;top:589px;width:39px;height:3px;line-height:3px;text-align:right;padding:0 1.4px 0 2px;color:#161616;border-right:1px solid #d3dcea;border-bottom:1px solid #d3dcea;"></div>
<div class="t" style="left:189px;top:589px;width:38px;height:3px;line-height:3px;text-align:right;padding:0 1.4px 0 2px;color:#161616;border-right:1px solid #d3dcea;border-bottom:1px solid #d3dcea;"></div>
<div class="t" style="left:227px;top:589px;width:40px;height:3px;line-height:3px;text-align:right;padding:0 1.4px 0 2px;color:#161616;border-right:1px solid #d3dcea;border-bottom:1px solid #d3dcea;"></div>
<div class="t" style="left:267px;top:589px;width:40px;height:3px;line-height:3px;text-align:right;padding:0 1.4px 0 2px;color:#161616;border-right:1px solid #d3dcea;border-bottom:1px solid #d3dcea;"></div>
<div class="t" style="left:311px;top:589px;width:37px;height:3px;line-height:3px;text-align:right;padding:0 1.4px 0 2px;color:#161616;border-right:1px solid #d3dcea;border-bottom:1px solid #d3dcea;"></div>
<div class="t" style="left:348px;top:589px;width:36px;height:3px;line-height:3px;text-align:right;padding:0 1.4px 0 2px;color:#161616;border-right:1px solid #d3dcea;border-bottom:1px solid #d3dcea;"></div>
<div class="t" style="left:384px;top:589px;width:37px;height:3px;line-height:3px;text-align:right;padding:0 1.4px 0 2px;color:#161616;border-right:1px solid #d3dcea;border-bottom:1px solid #d3dcea;"></div>
<div class="t" style="left:421px;top:589px;width:38px;height:3px;line-height:3px;text-align:right;padding:0 1.4px 0 2px;color:#161616;border-right:1px solid #d3dcea;border-bottom:1px solid #d3dcea;"></div>
<div class="t" style="left:459px;top:589px;width:37px;height:3px;line-height:3px;text-align:right;padding:0 1.4px 0 2px;color:#161616;border-right:1px solid #d3dcea;border-bottom:1px solid #d3dcea;"></div>
<div class="t" style="left:496px;top:589px;width:37px;height:3px;line-height:3px;text-align:right;padding:0 1.4px 0 2px;color:#161616;border-right:1px solid #d3dcea;border-bottom:1px solid #d3dcea;"></div>
<div class="t" style="left:533px;top:589px;width:37px;height:3px;line-height:3px;text-align:right;padding:0 1.4px 0 2px;color:#161616;border-right:1px solid #d3dcea;border-bottom:1px solid #d3dcea;"></div>
<div class="t" style="left:570px;top:589px;width:38px;height:3px;line-height:3px;text-align:right;padding:0 1.4px 0 2px;color:#161616;border-right:1px solid #d3dcea;border-bottom:1px solid #d3dcea;"></div>
<div class="t" style="left:608px;top:589px;width:42px;height:3px;line-height:3px;text-align:right;padding:0 1.4px 0 2px;color:#161616;border-right:1px solid #d3dcea;border-bottom:1px solid #d3dcea;"></div>
<div style="left:-5px;top:606px;width:107px;height:16px;background:#fff;border:1px solid #c3c9d8"></div>
<div class="t" style="left:-4px;top:607px;width:40px;height:14px;line-height:14px;text-align:left;">bined</div>
<div style="left:108px;top:606px;width:69px;height:16px;background:#fff;border:1px solid #c3c9d8"></div>
<div class="t" style="left:112px;top:607px;width:40px;height:14px;line-height:14px;text-align:left;">Auto</div>
<div style="left:546px;top:607px;width:10px;height:10px;background:#fff;border:1px solid #aab1c3"></div>
<div class="t" style="left:559px;top:606px;width:105px;height:15px;line-height:15px;text-align:left;">Ignore Today's Trades</div>
<div style="left:-5px;top:625px;width:670px;height:51px;background:#fff;border:1px solid #c3c9d8"></div>
<div class="t hd" style="left:-45px;top:626px;width:60px;height:17px;line-height:17px;text-align:center;"></div>
<div class="t" style="left:-45px;top:643px;width:60px;height:16px;line-height:17px;text-align:right;padding-right:1.6px;border-right:1px solid #d3d8e6;border-bottom:1px solid #d3d8e6;color:#161616;">30</div>
<div class="t" style="left:-45px;top:659px;width:60px;height:16px;line-height:17px;text-align:right;padding-right:1.6px;border-right:1px solid #d3d8e6;border-bottom:1px solid #d3d8e6;color:#161616;"></div>
<div class="t hd" style="left:15px;top:626px;width:59px;height:17px;line-height:17px;text-align:center;">Cost</div>
<div class="t" style="left:15px;top:643px;width:59px;height:16px;line-height:17px;text-align:right;padding-right:1.6px;border-right:1px solid #d3d8e6;border-bottom:1px solid #d3d8e6;color:#161616;">-57.10</div>
<div class="t" style="left:15px;top:659px;width:59px;height:16px;line-height:17px;text-align:right;padding-right:1.6px;border-right:1px solid #d3d8e6;border-bottom:1px solid #d3d8e6;color:#161616;"></div>
<div class="t hd" style="left:74px;top:626px;width:59px;height:17px;line-height:17px;text-align:center;">Curr Cost</div>
<div class="t" style="left:74px;top:643px;width:59px;height:16px;line-height:17px;text-align:right;padding-right:1.6px;border-right:1px solid #d3d8e6;border-bottom:1px solid #d3d8e6;color:#161616;">-25.00</div>
<div class="t" style="left:74px;top:659px;width:59px;height:16px;line-height:17px;text-align:right;padding-right:1.6px;border-right:1px solid #d3d8e6;border-bottom:1px solid #d3d8e6;color:#161616;"></div>
<div class="t hd" style="left:133px;top:626px;width:59px;height:17px;line-height:17px;text-align:center;">Commissi...</div>
<div class="t" style="left:133px;top:643px;width:59px;height:16px;line-height:17px;text-align:right;padding-right:1.6px;border-right:1px solid #d3d8e6;border-bottom:1px solid #d3d8e6;color:#161616;">2.10</div>
<div class="t" style="left:133px;top:659px;width:59px;height:16px;line-height:17px;text-align:right;padding-right:1.6px;border-right:1px solid #d3d8e6;border-bottom:1px solid #d3d8e6;color:#161616;"></div>
<div class="t hd" style="left:192px;top:626px;width:59px;height:17px;line-height:17px;text-align:center;">PnL</div>
<div class="t" style="left:192px;top:643px;width:59px;height:16px;line-height:17px;text-align:right;padding-right:1.6px;border-right:1px solid #d3d8e6;border-bottom:1px solid #d3d8e6;color:#161616;color:#e8262a;">-82.10</div>
<div class="t" style="left:192px;top:659px;width:59px;height:16px;line-height:17px;text-align:right;padding-right:1.6px;border-right:1px solid #d3d8e6;border-bottom:1px solid #d3d8e6;color:#161616;"></div>
<div class="t hd" style="left:251px;top:626px;width:59px;height:17px;line-height:17px;text-align:center;">PnL%</div>
<div class="t" style="left:251px;top:643px;width:59px;height:16px;line-height:17px;text-align:right;padding-right:1.6px;border-right:1px solid #d3d8e6;border-bottom:1px solid #d3d8e6;color:#161616;color:#e8262a;">-0.11%</div>
<div class="t" style="left:251px;top:659px;width:59px;height:16px;line-height:17px;text-align:right;padding-right:1.6px;border-right:1px solid #d3d8e6;border-bottom:1px solid #d3d8e6;color:#161616;"></div>
<div class="t hd" style="left:310px;top:626px;width:59px;height:17px;line-height:17px;text-align:center;">Delta</div>
<div class="t" style="left:310px;top:643px;width:59px;height:16px;line-height:17px;text-align:right;padding-right:1.6px;border-right:1px solid #d3d8e6;border-bottom:1px solid #d3d8e6;color:#161616;">-2.09</div>
<div class="t" style="left:310px;top:659px;width:59px;height:16px;line-height:17px;text-align:right;padding-right:1.6px;border-right:1px solid #d3d8e6;border-bottom:1px solid #d3d8e6;color:#161616;">0.00</div>
<div class="t hd" style="left:369px;top:626px;width:59px;height:17px;line-height:17px;text-align:center;">Gamma</div>
<div class="t" style="left:369px;top:643px;width:59px;height:16px;line-height:17px;text-align:right;padding-right:1.6px;border-right:1px solid #d3d8e6;border-bottom:1px solid #d3d8e6;color:#161616;">-0.13</div>
<div class="t" style="left:369px;top:659px;width:59px;height:16px;line-height:17px;text-align:right;padding-right:1.6px;border-right:1px solid #d3d8e6;border-bottom:1px solid #d3d8e6;color:#161616;">0.00</div>
<div class="t hd" style="left:428px;top:626px;width:59px;height:17px;line-height:17px;text-align:center;">Theta</div>
<div class="t" style="left:428px;top:643px;width:59px;height:16px;line-height:17px;text-align:right;padding-right:1.6px;border-right:1px solid #d3d8e6;border-bottom:1px solid #d3d8e6;color:#161616;">80.64</div>
<div class="t" style="left:428px;top:659px;width:59px;height:16px;line-height:17px;text-align:right;padding-right:1.6px;border-right:1px solid #d3d8e6;border-bottom:1px solid #d3d8e6;color:#161616;">0.00</div>
<div class="t hd" style="left:487px;top:626px;width:59px;height:17px;line-height:17px;text-align:center;">Vega</div>
<div class="t" style="left:487px;top:643px;width:59px;height:16px;line-height:17px;text-align:right;padding-right:1.6px;border-right:1px solid #d3d8e6;border-bottom:1px solid #d3d8e6;color:#161616;">-13.22</div>
<div class="t" style="left:487px;top:659px;width:59px;height:16px;line-height:17px;text-align:right;padding-right:1.6px;border-right:1px solid #d3d8e6;border-bottom:1px solid #d3d8e6;color:#161616;">0.00</div>
<div class="t hd" style="left:546px;top:626px;width:59px;height:17px;line-height:17px;text-align:center;">T/D</div>
<div class="t" style="left:546px;top:643px;width:59px;height:16px;line-height:17px;text-align:right;padding-right:1.6px;border-right:1px solid #d3d8e6;border-bottom:1px solid #d3d8e6;color:#161616;">38.6</div>
<div class="t" style="left:546px;top:659px;width:59px;height:16px;line-height:17px;text-align:right;padding-right:1.6px;border-right:1px solid #d3d8e6;border-bottom:1px solid #d3d8e6;color:#161616;">0</div>
<div class="t hd" style="left:605px;top:626px;width:59px;height:17px;line-height:17px;text-align:center;">Plot</div>
<div class="t" style="left:605px;top:643px;width:59px;height:16px;line-height:17px;text-align:right;padding-right:1.6px;border-right:1px solid #d3d8e6;border-bottom:1px solid #d3d8e6;color:#161616;"></div>
<div class="t" style="left:605px;top:659px;width:59px;height:16px;line-height:17px;text-align:right;padding-right:1.6px;border-right:1px solid #d3d8e6;border-bottom:1px solid #d3d8e6;color:#161616;"></div>
<div style="left:675px;top:138px;width:405px;height:515px;background:#d6dbe9;border-left:1px solid #b4bcd0"></div>
<div class="t" style="left:675px;top:138px;width:66px;height:23px;line-height:21px;text-align:center;background:#dadeeb;border:1px solid #b4bcd0;border-bottom:none;letter-spacing:-0.614px;">Risk Chart</div>
<div class="t" style="left:740px;top:138px;width:67px;height:22px;line-height:21px;text-align:center;background:#d2d7e5;border:1px solid #b4bcd0;letter-spacing:-0.556px;">Price Chart</div>
<div class="t" style="left:806px;top:138px;width:108px;height:22px;line-height:21px;text-align:center;background:#d2d7e5;border:1px solid #b4bcd0;letter-spacing:-0.474px;">Movement Analysis</div>
<div class="t" style="left:913px;top:138px;width:54px;height:22px;line-height:21px;text-align:center;background:#d2d7e5;border:1px solid #b4bcd0;letter-spacing:-0.495px;">Volatility</div>
<div class="t" style="left:966px;top:138px;width:135px;height:22px;line-height:21px;text-align:left;padding-left:9px;background:#d2d7e5;border:1px solid #b4bcd0;letter-spacing:-0.311px;">Statistics &amp; Fundamentals</div>
<div class="t" style="left:680px;top:164px;width:48px;height:15px;line-height:15px;text-align:left;">Vol Adjust</div>
<div style="left:730px;top:164px;width:44px;height:16px;background:#fff;border:1px solid #c3c9d8"></div>
<div class="t" style="left:732px;top:165px;width:27px;height:14px;line-height:14px;text-align:right;color:#161616">0</div>
<div class="t" style="left:781.4px;top:164px;width:50px;height:15px;line-height:15px;text-align:left;letter-spacing:-0.559px;">Theo Price</div>
<div style="left:833px;top:164px;width:68px;height:16px;background:#fff;border:1px solid #c3c9d8"></div>
<div class="t" style="left:835px;top:165px;width:50px;height:14px;line-height:14px;text-align:right;color:#161616">5486.91</div>
<div class="t" style="left:988px;top:164px;width:46px;height:15px;line-height:15px;text-align:left;letter-spacing:-0.471px;">Projection</div>
<div style="left:1036px;top:164px;width:60px;height:16px;background:#fff;border:1px solid #c3c9d8"></div>
<div class="t" style="left:1038.4px;top:165px;width:50px;height:14px;line-height:14px;text-align:left;letter-spacing:0.15px;color:#161616">27/06/2024</div>
<div style="left:676px;top:182px;width:404px;height:472px;background:#fff"></div>
<div style="left:676px;top:653px;width:404px;height:22px;background:#293955"></div>
<div class="t" style="left:1043.2px;top:657.5px;width:30px;height:14px;line-height:14px;text-align:left;color:#fff;letter-spacing:-0.208px;">220%</div>
<div style="left:1077px;top:664px;width:4px;height:1px;background:#fff"></div>
<svg width="1080" height="675" viewBox="0 0 1080 675" style="left:0;top:0;pointer-events:none" font-family="'Liberation Sans',sans-serif" letter-spacing="0">
<rect x="676" y="182" width="404" height="472" fill="#fff"/>
<rect x="1028.4" y="197.2" width="17.7" height="277.0" fill="#92cddc"/>
<rect x="1046.1" y="197.2" width="34" height="277.0" fill="#4f81bd"/>
<path d="M720 197.5H1080 M720 211.5H1080 M720 226.5H1080 M720 240.5H1080 M720 255.5H1080 M720 270.5H1080 M720 284.5H1080 M720 299.5H1080 M720 313.5H1080 M720 328.5H1080 M720 343.5H1080 M720 357.5H1080 M720 372.5H1080 M720 386.5H1080 M720 401.5H1080 M720 415.5H1080 M720 430.5H1080 M720 445.5H1080 M720 459.5H1080 M720 474.5H1080 M736.5 192.2V475.2 M793.5 192.2V475.2 M849.5 192.2V475.2 M906.5 192.2V475.2 M963.5 192.2V475.2 M1020.5 192.2V475.2 M1077.5 192.2V475.2 M723.5 192.2V475.2" stroke="#e2e2e2" stroke-opacity="0.8" stroke-width="1" fill="none"/>
<rect x="681" y="366.5" width="38.5" height="11.4" fill="#cc0000"/>
<text transform="translate(717.6,200.8) scale(0.93,1)" text-anchor="end" fill="#333" font-size="9.3">16%</text>
<text transform="translate(717.6,215.4) scale(0.93,1)" text-anchor="end" fill="#333" font-size="9.3">14%</text>
<text transform="translate(717.6,230.0) scale(0.93,1)" text-anchor="end" fill="#333" font-size="9.3">13%</text>
<text transform="translate(717.6,244.5) scale(0.93,1)" text-anchor="end" fill="#333" font-size="9.3">12%</text>
<text transform="translate(717.6,259.1) scale(0.93,1)" text-anchor="end" fill="#333" font-size="9.3">10%</text>
<text transform="translate(717.6,273.7) scale(0.93,1)" text-anchor="end" fill="#333" font-size="9.3">9%</text>
<text transform="translate(717.6,288.3) scale(0.93,1)" text-anchor="end" fill="#333" font-size="9.3">8%</text>
<text transform="translate(717.6,302.9) scale(0.93,1)" text-anchor="end" fill="#333" font-size="9.3">6%</text>
<text transform="translate(717.6,317.4) scale(0.93,1)" text-anchor="end" fill="#333" font-size="9.3">5%</text>
<text transform="translate(717.6,332.0) scale(0.93,1)" text-anchor="end" fill="#333" font-size="9.3">4%</text>
<text transform="translate(717.6,346.6) scale(0.93,1)" text-anchor="end" fill="#333" font-size="9.3">3%</text>
<text transform="translate(717.6,361.2) scale(0.93,1)" text-anchor="end" fill="#333" font-size="9.3">1%</text>
<text transform="translate(717.6,375.8) scale(0.93,1)" text-anchor="end" fill="#fff" font-size="9.3">0%</text>
<text transform="translate(717.6,390.3) scale(0.93,1)" text-anchor="end" fill="#333" font-size="9.3">-1%</text>
<text transform="translate(717.6,404.9) scale(0.93,1)" text-anchor="end" fill="#333" font-size="9.3">-3%</text>
<text transform="translate(717.6,419.5) scale(0.93,1)" text-anchor="end" fill="#333" font-size="9.3">-4%</text>
<text transform="translate(717.6,434.1) scale(0.93,1)" text-anchor="end" fill="#333" font-size="9.3">-5%</text>
<text transform="translate(717.6,448.7) scale(0.93,1)" text-anchor="end" fill="#333" font-size="9.3">-6%</text>
<text transform="translate(717.6,463.2) scale(0.93,1)" text-anchor="end" fill="#333" font-size="9.3">-8%</text>
<text transform="translate(717.6,477.8) scale(0.93,1)" text-anchor="end" fill="#333" font-size="9.3">-9%</text>
<text transform="translate(736.3,192.8) scale(0.93,1)" text-anchor="middle" fill="#333" font-size="9.3">-10.5%</text>
<text transform="translate(793.1,192.8) scale(0.93,1)" text-anchor="middle" fill="#333" font-size="9.3">-8.7%</text>
<text transform="translate(849.9,192.8) scale(0.93,1)" text-anchor="middle" fill="#333" font-size="9.3">-6.9%</text>
<text transform="translate(906.7,192.8) scale(0.93,1)" text-anchor="middle" fill="#333" font-size="9.3">-5.1%</text>
<text transform="translate(963.5,192.8) scale(0.93,1)" text-anchor="middle" fill="#333" font-size="9.3">-3.2%</text>
<text transform="translate(1020.3,192.8) scale(0.93,1)" text-anchor="middle" fill="#333" font-size="9.3">-1.4%</text>
<rect x="1057.5" y="183" width="26" height="10" fill="#eaf0f9" stroke="#6a7a92" stroke-width=".9"/>
<text transform="translate(1060.2,191.6) scale(0.93,1)" text-anchor="start" fill="#333" font-size="9.3">0.2%</text>
<text transform="translate(736.3,487.4) scale(0.93,1)" text-anchor="middle" fill="#333" font-size="9.3">4900</text>
<text transform="translate(793.1,487.4) scale(0.93,1)" text-anchor="middle" fill="#333" font-size="9.3">5000</text>
<text transform="translate(849.9,487.4) scale(0.93,1)" text-anchor="middle" fill="#333" font-size="9.3">5100</text>
<text transform="translate(906.7,487.4) scale(0.93,1)" text-anchor="middle" fill="#333" font-size="9.3">5200</text>
<text transform="translate(963.5,487.4) scale(0.93,1)" text-anchor="middle" fill="#333" font-size="9.3">5300</text>
<text transform="translate(1020.3,487.4) scale(0.93,1)" text-anchor="middle" fill="#333" font-size="9.3">5400</text>
<text transform="translate(1038.8,232.0) rotate(-90) scale(0.93,1)" text-anchor="start" fill="#6496d6" font-size="9.3">5415.05</text>
<text transform="translate(1056.2,232.0) rotate(-90) scale(0.93,1)" text-anchor="start" fill="#9dbde6" font-size="9.3">5446.47</text>
<text transform="translate(1081.0,232.0) rotate(-90) scale(0.93,1)" text-anchor="start" fill="#7ea6da" font-size="9.3">5509.33</text>
<path d="M723.5 372.5H776" stroke="#222" stroke-width="1"/>
<path d="M775.5 197.2V475.2" stroke="#b03ab0" stroke-width="1" stroke-dasharray="2.5 3" fill="none"/>
<path d="M723.4 203.7C725.5 207.1 731.6 217.0 736.0 224.0C740.4 231.0 743.4 235.8 750.0 245.5C756.6 255.2 768.2 272.8 775.4 282.4C782.6 292.0 787.1 296.7 793.0 303.0C798.9 309.3 805.0 315.2 810.5 320.0C816.0 324.8 821.0 328.2 826.0 331.5C831.0 334.8 835.4 337.2 840.7 340.0C846.0 342.8 852.1 345.8 858.0 348.5C863.9 351.2 870.5 354.3 876.0 356.3C881.5 358.3 886.0 359.2 891.0 360.5C896.0 361.8 901.5 362.9 906.3 363.9C911.1 364.9 915.2 365.6 920.0 366.4C924.8 367.2 930.0 368.0 935.0 368.6C940.0 369.2 945.3 369.8 950.0 370.2C954.7 370.6 958.4 371.0 963.4 371.3C968.4 371.6 973.9 371.8 980.0 372.0C986.1 372.2 993.3 372.3 1000.0 372.4C1006.7 372.5 1016.7 372.5 1020.0 372.5" stroke="#9b8fd6" stroke-width="1.1" fill="none"/>
<path d="M723.4 238L775.6 372.2H1080" stroke="#4f52cc" stroke-width="1.5" fill="none" stroke-linejoin="miter"/>
<rect x="1062.5" y="369.2" width="5" height="6" fill="#c9a0a8" opacity="0.8"/>
<path d="M1058.5 372.7H1068" stroke="#e00000" stroke-width="1.6"/>
<circle cx="1070" cy="372.8" r="3" fill="#e60000" stroke="#111" stroke-width="1"/>
<rect x="727.7" y="202.5" width="134.6" height="57.5" rx="3.5" fill="#edf2fa" fill-opacity="0.82" stroke="#8497b0" stroke-width="1"/>
<rect x="733.8" y="209.1" width="3" height="10.5" fill="#f24444"/>
<rect x="733.8" y="220.6" width="3" height="10.5" fill="#7fa8ea"/>
<rect x="733.8" y="232.2" width="3" height="10.5" fill="#7fa8ea"/>
<rect x="733.8" y="243.9" width="3" height="10.5" fill="#7fa8ea"/>
<text transform="translate(737.2,217.9) scale(0.96,1)" text-anchor="start" fill="#555" font-size="9.3">-2.10 Realized PnL</text>
<text transform="translate(737.2,229.4) scale(0.93,1)" text-anchor="start" fill="#444" font-size="9.3">+1</text>
<text transform="translate(749.7,229.4) scale(0.96,1)" text-anchor="start" fill="#4d4dff" font-size="9.3">28jun. 4970 Put Δ</text>
<text transform="translate(855.5,229.4) scale(0.93,1)" text-anchor="end" fill="#4d4dff" font-size="9.3">-0.10</text>
<text transform="translate(737.2,241.0) scale(0.93,1)" text-anchor="start" fill="#444" font-size="9.3">-1</text>
<text transform="translate(746.7,241.0) scale(0.96,1)" text-anchor="start" fill="#f25a5a" font-size="9.3">28jun. 5565 Call Δ</text>
<text transform="translate(853.8,241.0) scale(0.93,1)" text-anchor="end" fill="#f25a5a" font-size="9.3">2.01</text>
<text transform="translate(737.2,252.7) scale(0.93,1)" text-anchor="start" fill="#444" font-size="9.3">-1</text>
<text transform="translate(746.7,252.7) scale(0.96,1)" text-anchor="start" fill="#f25a5a" font-size="9.3">28jun. 4185 Put Δ</text>
<text transform="translate(852.6,252.7) scale(0.93,1)" text-anchor="end" fill="#f25a5a" font-size="9.3">-0.02</text>
<rect x="727.5" y="423.5" width="87" height="46.5" rx="3.5" fill="#edf2fa" fill-opacity="0.82" stroke="#8497b0" stroke-width="1"/>
<text transform="translate(734.0,439.1) scale(0.93,1)" text-anchor="start" fill="#7f7fdc" font-size="9.3">28/06/2024 (0)</text>
<text transform="translate(734.0,450.5) scale(0.93,1)" text-anchor="start" fill="#f27878" font-size="9.3">27/06/2024 (1) T+0</text>
<text transform="translate(734.0,462.1) scale(0.93,1)" text-anchor="start" fill="#8db0f2" font-size="9.3">27/06/2024 (1) T+0</text>
<text transform="translate(774.6,472.0) rotate(-90) scale(0.93,1)" text-anchor="start" fill="#c58fd0" font-size="9.3">4970.00</text>
<text transform="translate(739.6,466.6) scale(0.93,1)" text-anchor="start" fill="#9a2f9a" font-size="9.3">0.0%</text>
<text transform="translate(962.5,466.6) scale(0.93,1)" text-anchor="middle" fill="#a030a0" font-size="9.3">100.0%</text>
<rect x="679.5" y="492.5" width="410" height="157.5" rx="3.5" fill="#e9eff8" stroke="#8c9bb0" stroke-width="1"/>
<text transform="translate(701.5,519.9) scale(0.93,1)" text-anchor="middle" fill="#666" font-size="9.3">PnL</text>
<text transform="translate(736.3,524.8) scale(0.93,1)" text-anchor="middle" fill="#5b6cf5" font-size="9.3">10068</text>
<text transform="translate(793.1,524.8) scale(0.93,1)" text-anchor="middle" fill="#5b6cf5" font-size="9.3">4802</text>
<text transform="translate(849.9,524.8) scale(0.93,1)" text-anchor="middle" fill="#5b6cf5" font-size="9.3">1814</text>
<text transform="translate(906.7,524.8) scale(0.93,1)" text-anchor="middle" fill="#5b6cf5" font-size="9.3">506</text>
<text transform="translate(963.5,524.8) scale(0.93,1)" text-anchor="middle" fill="#5b6cf5" font-size="9.3">72</text>
<text transform="translate(736.3,533.1) scale(0.93,1)" text-anchor="middle" fill="#5b6cf5" font-size="9.3">13%</text>
<text transform="translate(793.1,533.1) scale(0.93,1)" text-anchor="middle" fill="#5b6cf5" font-size="9.3">6%</text>
<text transform="translate(849.9,533.1) scale(0.93,1)" text-anchor="middle" fill="#5b6cf5" font-size="9.3">2%</text>
<text transform="translate(906.7,533.1) scale(0.93,1)" text-anchor="middle" fill="#5b6cf5" font-size="9.3">1%</text>
<text transform="translate(963.5,533.1) scale(0.93,1)" text-anchor="middle" fill="#5b6cf5" font-size="9.3">0%</text>
<text transform="translate(1020.3,505.2) scale(0.93,1)" text-anchor="middle" fill="#f08080" font-size="9.3">0%</text>
<text transform="translate(1020.3,515.6) scale(0.93,1)" text-anchor="middle" fill="#f08080" font-size="9.3">-36</text>
<path d="M723.7 515.6H1049" stroke="#5a5f6e" stroke-width="1"/>
<rect x="723.7" y="507.0" width="42.2" height="8.6" fill="#4a6cf7" stroke="#444a60" stroke-width="0.8"/>
<rect x="765.9" y="511.7" width="56.8" height="3.9" fill="#4a6cf7" stroke="#444a60" stroke-width="0.8"/>
<rect x="822.7" y="514.2" width="56.6" height="1.4" fill="#4a6cf7" stroke="#444a60" stroke-width="0.8"/>
<rect x="879.3" y="515.1" width="56.9" height="0.5" fill="#4a6cf7" stroke="#444a60" stroke-width="0.8"/>
<text transform="translate(701.5,556.1) scale(0.93,1)" text-anchor="middle" fill="#666" font-size="9.3">Delta</text>
<text transform="translate(736.3,551.8) scale(0.93,1)" text-anchor="middle" fill="#ee6a6a" font-size="9.3">-64.27</text>
<text transform="translate(793.1,551.8) scale(0.93,1)" text-anchor="middle" fill="#ee6a6a" font-size="9.3">-40.78</text>
<text transform="translate(849.9,551.8) scale(0.93,1)" text-anchor="middle" fill="#ee6a6a" font-size="9.3">-20.08</text>
<text transform="translate(906.7,551.8) scale(0.93,1)" text-anchor="middle" fill="#ee6a6a" font-size="9.3">-7.50</text>
<text transform="translate(963.5,551.8) scale(0.93,1)" text-anchor="middle" fill="#ee6a6a" font-size="9.3">-2.10</text>
<text transform="translate(1020.3,551.8) scale(0.93,1)" text-anchor="middle" fill="#ee6a6a" font-size="9.3">-0.43</text>
<path d="M723.7 553.0H1049" stroke="#5a5f6e" stroke-width="1"/>
<rect x="723.7" y="553.0" width="42.2" height="6.4" fill="#f27b7b" stroke="#444a60" stroke-width="0.8"/>
<rect x="765.9" y="553.0" width="56.8" height="3.4" fill="#f27b7b" stroke="#444a60" stroke-width="0.8"/>
<rect x="822.7" y="553.0" width="56.6" height="1.6" fill="#f27b7b" stroke="#444a60" stroke-width="0.8"/>
<rect x="879.3" y="553.0" width="56.9" height="0.6" fill="#f27b7b" stroke="#444a60" stroke-width="0.8"/>
<text transform="translate(701.5,583.8) scale(0.93,1)" text-anchor="middle" fill="#666" font-size="9.3">Gamma</text>
<path d="M723.7 579.5H1049" stroke="#5a5f6e" stroke-width="1"/>
<rect x="723.7" y="577.4" width="42.2" height="2.1" fill="#4a6cf7" stroke="#444a60" stroke-width="0.8"/>
<rect x="765.9" y="576.1" width="56.8" height="3.4" fill="#4a6cf7" stroke="#444a60" stroke-width="0.8"/>
<rect x="822.7" y="577.4" width="56.6" height="2.1" fill="#4a6cf7" stroke="#444a60" stroke-width="0.8"/>
<rect x="879.3" y="578.4" width="56.9" height="1.1" fill="#4a6cf7" stroke="#444a60" stroke-width="0.8"/>
<rect x="936.2" y="579.1" width="57.1" height="0.4" fill="#4a6cf7" stroke="#444a60" stroke-width="0.8"/>
<text transform="translate(736.3,588.5) scale(0.93,1)" text-anchor="middle" fill="#5b6cf5" font-size="9.3">0.22</text>
<text transform="translate(793.1,588.5) scale(0.93,1)" text-anchor="middle" fill="#5b6cf5" font-size="9.3">0.24</text>
<text transform="translate(849.9,588.5) scale(0.93,1)" text-anchor="middle" fill="#5b6cf5" font-size="9.3">0.17</text>
<text transform="translate(906.7,588.5) scale(0.93,1)" text-anchor="middle" fill="#5b6cf5" font-size="9.3">0.08</text>
<text transform="translate(963.5,588.5) scale(0.93,1)" text-anchor="middle" fill="#5b6cf5" font-size="9.3">0.03</text>
<text transform="translate(1020.3,588.5) scale(0.93,1)" text-anchor="middle" fill="#5b6cf5" font-size="9.3">0.01</text>
<text transform="translate(701.5,611.1) scale(0.93,1)" text-anchor="middle" fill="#666" font-size="9.3">Theta</text>
<text transform="translate(736.3,606.8) scale(0.93,1)" text-anchor="middle" fill="#ee6a6a" font-size="9.3">-1926.40</text>
<text transform="translate(793.1,606.8) scale(0.93,1)" text-anchor="middle" fill="#ee6a6a" font-size="9.3">-2590.41</text>
<text transform="translate(849.9,606.8) scale(0.93,1)" text-anchor="middle" fill="#ee6a6a" font-size="9.3">-2038.55</text>
<text transform="translate(906.7,606.8) scale(0.93,1)" text-anchor="middle" fill="#ee6a6a" font-size="9.3">-1059.48</text>
<text transform="translate(963.5,606.8) scale(0.93,1)" text-anchor="middle" fill="#ee6a6a" font-size="9.3">-372.61</text>
<text transform="translate(1020.3,606.8) scale(0.93,1)" text-anchor="middle" fill="#ee6a6a" font-size="9.3">-84.25</text>
<path d="M723.7 607.5H1049" stroke="#5a5f6e" stroke-width="1"/>
<rect x="723.7" y="607.5" width="42.2" height="6.2" fill="#f27b7b" stroke="#444a60" stroke-width="0.8"/>
<rect x="765.9" y="607.5" width="56.8" height="8.9" fill="#f27b7b" stroke="#444a60" stroke-width="0.8"/>
<rect x="822.7" y="607.5" width="56.6" height="6.6" fill="#f27b7b" stroke="#444a60" stroke-width="0.8"/>
<rect x="879.3" y="607.5" width="56.9" height="3.2" fill="#f27b7b" stroke="#444a60" stroke-width="0.8"/>
<rect x="936.2" y="607.5" width="57.1" height="1.2" fill="#f27b7b" stroke="#444a60" stroke-width="0.8"/>
<rect x="993.3" y="607.5" width="55.7" height="0.3" fill="#f27b7b" stroke="#444a60" stroke-width="0.8"/>
<text transform="translate(701.5,638.8) scale(0.93,1)" text-anchor="middle" fill="#666" font-size="9.3">Vega</text>
<path d="M723.7 634.4H1049" stroke="#5a5f6e" stroke-width="1"/>
<rect x="723.7" y="627.2" width="42.2" height="7.2" fill="#4a6cf7" stroke="#444a60" stroke-width="0.8"/>
<rect x="765.9" y="625.6" width="56.8" height="8.8" fill="#4a6cf7" stroke="#444a60" stroke-width="0.8"/>
<rect x="822.7" y="627.9" width="56.6" height="6.5" fill="#4a6cf7" stroke="#444a60" stroke-width="0.8"/>
<rect x="879.3" y="631.0" width="56.9" height="3.4" fill="#4a6cf7" stroke="#444a60" stroke-width="0.8"/>
<rect x="936.2" y="633.1" width="57.1" height="1.3" fill="#4a6cf7" stroke="#444a60" stroke-width="0.8"/>
<rect x="993.3" y="634.1" width="55.7" height="0.3" fill="#4a6cf7" stroke="#444a60" stroke-width="0.8"/>
<text transform="translate(736.3,643.5) scale(0.93,1)" text-anchor="middle" fill="#5b6cf5" font-size="9.3">81.38</text>
<text transform="translate(793.1,643.5) scale(0.93,1)" text-anchor="middle" fill="#5b6cf5" font-size="9.3">95.03</text>
<text transform="translate(849.9,643.5) scale(0.93,1)" text-anchor="middle" fill="#5b6cf5" font-size="9.3">72.11</text>
<text transform="translate(906.7,643.5) scale(0.93,1)" text-anchor="middle" fill="#5b6cf5" font-size="9.3">37.42</text>
<text transform="translate(963.5,643.5) scale(0.93,1)" text-anchor="middle" fill="#5b6cf5" font-size="9.3">13.58</text>
<text transform="translate(1020.3,643.5) scale(0.93,1)" text-anchor="middle" fill="#5b6cf5" font-size="9.3">3.43</text>
<rect x="1048.7" y="479.3" width="40" height="170.5" rx="3.5" fill="#e9eff8" stroke="#6f7f94" stroke-width="1"/>
<text transform="translate(1054.0,487.9) scale(0.93,1)" text-anchor="start" fill="#333" font-size="9.3">5486.91</text>
<text transform="translate(1066.0,504.9) scale(0.93,1)" text-anchor="start" fill="#f6dada" font-size="9.3">0%</text>
<text transform="translate(1063.0,515.9) scale(0.93,1)" text-anchor="start" fill="#ee2c2c" font-size="9.3" font-weight="normal">-82</text>
<text transform="translate(1058.5,529.0) scale(0.93,1)" text-anchor="start" fill="#ee2c2c" font-size="9.3">-0.1%</text>
<text transform="translate(1060.2,556.7) scale(0.93,1)" text-anchor="start" fill="#ee2c2c" font-size="9.3">-2.09</text>
<text transform="translate(1060.2,583.9) scale(0.93,1)" text-anchor="start" fill="#ee2c2c" font-size="9.3">-0.13</text>
<text transform="translate(1060.0,611.3) scale(0.93,1)" text-anchor="start" fill="#2a2ae8" font-size="9.3">80.64</text>
<text transform="translate(1058.5,638.7) scale(0.93,1)" text-anchor="start" fill="#ee2c2c" font-size="9.3">-13.22</text>
</svg>
<svg width="1080" height="675" viewBox="0 0 1080 675" style="left:0;top:0;pointer-events:none">
<defs>
<linearGradient id="gR" x1="0" x2="1"><stop offset="0" stop-color="#f28a80"/><stop offset=".5" stop-color="#e0584c"/><stop offset="1" stop-color="#c8443c"/></linearGradient>
<linearGradient id="gB" x1="0" x2="1"><stop offset="0" stop-color="#9cc8f4"/><stop offset=".5" stop-color="#5a9ce0"/><stop offset="1" stop-color="#4482cc"/></linearGradient>
<linearGradient id="gG" x1="0" x2="1"><stop offset="0" stop-color="#b4dc78"/><stop offset=".5" stop-color="#82b83c"/><stop offset="1" stop-color="#6a9c2c"/></linearGradient>
<linearGradient id="gO" x1="0" x2="1"><stop offset="0" stop-color="#fcd49c"/><stop offset=".5" stop-color="#f4a850"/><stop offset="1" stop-color="#e08830"/></linearGradient>
<linearGradient id="gPlay" x1="0" y1="0" x2="0" y2="1"><stop offset="0" stop-color="#b4dcf8"/><stop offset=".5" stop-color="#74b0e4"/><stop offset="1" stop-color="#4c8cd0"/></linearGradient>
<linearGradient id="gRss" x1="0" y1="0" x2="0" y2="1"><stop offset="0" stop-color="#fbb050"/><stop offset="1" stop-color="#e86c0c"/></linearGradient>
<linearGradient id="gSig" x1="0" y1="0" x2="0" y2="1"><stop offset="0" stop-color="#fcd060"/><stop offset="1" stop-color="#f09018"/></linearGradient>
<linearGradient id="gChevL" x1="0" x2="1"><stop offset="0" stop-color="#24408c"/><stop offset="1" stop-color="#6484c4"/></linearGradient>
<linearGradient id="gChevR" x1="1" x2="0"><stop offset="0" stop-color="#24408c"/><stop offset="1" stop-color="#6484c4"/></linearGradient>
<radialGradient id="gSph" cx=".4" cy=".35" r=".7"><stop offset="0" stop-color="#b8d8f8"/><stop offset="1" stop-color="#3c78c8"/></radialGradient>
</defs>
<rect x="0.8" y="67.3" width="5.2" height="9.3" rx="1" fill="url(#gR)"/>
<rect x="7" y="63.2" width="5.2" height="13.4" rx="1" fill="url(#gB)"/>
<rect x="13" y="59" width="5.2" height="17.6" rx="1" fill="url(#gG)"/>
<rect x="19.2" y="54.8" width="5.2" height="21.8" rx="1" fill="url(#gO)"/>
<rect x="64.5" y="54" width="19.5" height="23" fill="#fbfcff" stroke="#aeb8d8" stroke-width="1"/>
<path d="M67.5 58.5H81 M67.5 60.5H81 M67.5 62.5H81 M67.5 64.5H81 M67.5 66.5H81 M67.5 68.5H81 M67.5 70.5H81 M67.5 72.5H81" stroke="#b0bce2" stroke-width="1.35"/>
<rect x="129.5" y="54.5" width="18.5" height="22" fill="#fbfcff" stroke="#b4bcd8" stroke-width="1"/>
<path d="M132.5 58.5H143 M132.5 60.5H143 M132.5 66.5H143 M132.5 68.5H143 M132.5 70.5H143 M132.5 72.5H143" stroke="#b4c0e4" stroke-width="1.2"/>
<path d="M133 63.7H143" stroke="#7cb83c" stroke-width="1.2"/>
<path d="M145.6 58.2h3.8v3.6h3.6v3.8h-3.6v3.6h-3.8v-3.6h-3.6v-3.8h3.6z" fill="#8cc83c" stroke="#5c9c20" stroke-width=".8" stroke-linejoin="round"/>
<path d="M194.2 75.4L187 82.4L194.2 89.4H197.6L190.6 82.4L197.6 75.4Z" fill="url(#gChevL)"/>
<path d="M198.8 75.4L191.8 82.4L198.8 89.4H200.6L193.8 82.4L200.6 75.4Z" fill="#88a0d4" opacity=".75"/>
<path d="M396.6 75.4L403.8 82.4L396.6 89.4H393.2L400.2 82.4L393.2 75.4Z" fill="url(#gChevR)"/>
<path d="M392 75.4L399 82.4L392 89.4H390.2L397 82.4L390.2 75.4Z" fill="#88a0d4" opacity=".75"/>
<rect x="331" y="56" width="10" height="9" fill="#f4f6fc" stroke="#a8b4d8" stroke-width=".8"/>
<rect x="331" y="56" width="10" height="2.2" fill="#e0584c"/>
<rect x="332" y="59" width="4" height="5.5" fill="#c8d4f0"/><rect x="337" y="59" width="3.4" height="5.5" fill="#f0c4c0"/>
<rect x="345" y="55.5" width="10.5" height="10" fill="#d8d8d8" stroke="#b4b4b4" stroke-width="1"/>
<path d="M348.5 58V63.5M348.5 60.7H352M352 58V63.5" stroke="#8c8c8c" stroke-width="1" fill="none"/>
<circle cx="421.6" cy="57.3" r="1.25" fill="#dcecfc" stroke="#4c8cd8" stroke-width=".8"/>
<path d="M424.3 57.3H431.8" stroke="#474f60" stroke-width="1.5"/>
<circle cx="421.6" cy="61" r="1.25" fill="#dcecfc" stroke="#4c8cd8" stroke-width=".8"/>
<path d="M424.3 61H431.8" stroke="#474f60" stroke-width="1.5"/>
<circle cx="421.6" cy="64.7" r="1.25" fill="#dcecfc" stroke="#4c8cd8" stroke-width=".8"/>
<path d="M424.3 64.7H431.8" stroke="#474f60" stroke-width="1.5"/>
<path d="M420.8 77.5H431V80H425.2L428.6 83.1L425 86.4H431.2V88.9H420.6V86.9L424.9 83.1L420.8 79.4Z" fill="url(#gSig)" stroke="#e8981c" stroke-width=".4"/>
<rect x="487.3" y="55.8" width="11.8" height="11" fill="#f8f9fc" stroke="#c0c8dc" stroke-width="1"/>
<path d="M488.6 63.6C490.6 66.4 492 65.4 493 62 C494 58.6 495.6 57.6 497.6 60.2" stroke="#74ac3c" stroke-width="1.1" fill="none"/>
<path d="M496.4 58.6L498 60.8" stroke="#3c6cd0" stroke-width="1.2"/>
<rect x="487.3" y="77.8" width="11.8" height="11" fill="#f8f9fc" stroke="#c0c8dc" stroke-width="1"/>
<path d="M490.2 79V88M496 79V88" stroke="#d83030" stroke-width="1"/><rect x="489.2" y="80.5" width="2" height="5.5" fill="#e03838"/><rect x="495" y="80" width="2" height="6" fill="#e03838"/>
<path d="M493.1 80V88" stroke="#787878" stroke-width="1"/><rect x="492.2" y="81.5" width="1.8" height="4" fill="#a0a0a0"/>
<rect x="562.5" y="55.8" width="12" height="10.6" fill="#fdfeff" stroke="#a4c0e8" stroke-width="1"/>
<rect x="563" y="56.3" width="11" height="2.4" fill="#8cc0f4"/>
<path d="M565.5 56V66M568.5 56V66M571.5 56V66M563 59.2H574M563 61.6H574M563 64H574" stroke="#b8d0f0" stroke-width=".8"/>
<rect x="563.5" y="77.8" width="10" height="11" fill="#cfcfcf" stroke="#b4b4b4" stroke-width="1"/>
<rect x="563.5" y="77.8" width="10" height="2" fill="#c0c0c0"/>
<text x="568.5" y="87.3" font-family="'Liberation Sans',sans-serif" font-size="8" font-weight="bold" fill="#9c9c9c" text-anchor="middle" letter-spacing="0">$</text>
<rect x="646.5" y="56" width="10.5" height="8.8" fill="#f6f9ff" stroke="#8cacdc" stroke-width="1"/><rect x="646.5" y="56" width="10.5" height="2.4" fill="#5c9ce4"/>
<ellipse cx="654.2" cy="64.2" rx="4.6" ry="2.7" fill="#f4f4f8" stroke="#5c6484" stroke-width=".8"/><circle cx="654.2" cy="64.2" r="1.9" fill="#4c6898"/><circle cx="654.2" cy="64.2" r=".8" fill="#1c2438"/>
<path d="M646.3 83.6C649 78.8 656 78.8 658.8 83.6" stroke="#d89048" stroke-width="1.3" fill="none"/>
<ellipse cx="652.5" cy="84" rx="6" ry="3.4" fill="#f8f8fc" stroke="#7c84a0" stroke-width=".8"/><circle cx="652.5" cy="84" r="2.6" fill="#5c7cac"/><circle cx="652.5" cy="84" r="1.1" fill="#1c2438"/>
<rect x="732.9" y="55.6" width="11.4" height="10.6" fill="#e4e4e4" stroke="#bcbcbc" stroke-width="1"/><rect x="732.9" y="55.6" width="11.4" height="2.6" fill="#c4c4c4"/>
<path d="M735 60.5h1.8v1.6H735zM737.8 60.5h1.8v1.6h-1.8zM740.6 60.5h1.8v1.6h-1.8zM735 63h1.8v1.6H735zM737.8 63h1.8v1.6h-1.8zM740.6 63h1.8v1.6h-1.8z" fill="#c8c8c8"/>
<rect x="732.6" y="77.3" width="12" height="11.5" rx="1.6" fill="url(#gRss)" stroke="#e07818" stroke-width=".6"/>
<circle cx="735.7" cy="86" r="1.1" fill="#fff"/><path d="M734.8 82.6A3.6 3.6 0 0 1 739.2 87M734.8 80A6.3 6.3 0 0 1 741.9 87" stroke="#fff" stroke-width="1.3" fill="none"/>
<circle cx="820.4" cy="65.8" r="11.6" fill="url(#gPlay)" stroke="#5088c8" stroke-width="1"/>
<ellipse cx="820.4" cy="60" rx="9" ry="5.5" fill="#fff" opacity=".22"/>
<path d="M816.6 59.6V72L826.2 65.8Z" fill="#f4f8fc" stroke="#4474b4" stroke-width=".8" stroke-linejoin="round"/>
<path d="M913.2 59.8H917.6L915.4 62.2Z" fill="#3c4458"/>
<path d="M876 81.8H882.2" stroke="#4a556a" stroke-width="1.5"/>
<path d="M885.8 81.8H926.4" stroke="#7c847c" stroke-width="1.5"/>
<rect x="906" y="78.8" width="2.8" height="6" rx="1.2" fill="#f4f4f4" stroke="#50586c" stroke-width=".8"/>
<rect x="926.4" y="78.3" width="3.4" height="7.4" fill="#f8f0a4" stroke="#50586c" stroke-width=".8"/>
<path d="M933.4 81.8H939M936.2 79V84.6" stroke="#4a556a" stroke-width="1.6"/><rect x="935.6" y="81.2" width="1.2" height="1.2" fill="#d6dbe9"/>
<path d="M1037.4 37.4L1040.6 33.6L1043.8 37.4Z" fill="#1c1c24"/>
<text x="1062.8" y="41.4" font-family="'Liberation Sans',sans-serif" font-size="15" font-weight="bold" fill="#8cc0f0" stroke="#5c98d8" stroke-width=".5" text-anchor="middle" letter-spacing="0">?</text>
<path d="M794 107.2V111.2H790Z" fill="#5c6478"/>
<ellipse cx="1066" cy="92.4" rx="7.5" ry="1.6" fill="#b4b8c6" opacity=".7"/>
<g fill="none" stroke="#e4b838" stroke-width="1.8"><ellipse cx="1082" cy="73.5" rx="27" ry="8.5" transform="rotate(-33 1082 73.5)"/><path d="M1074.3 87.2Q1077.2 92 1081.5 96.4"/></g>
<g fill="none" stroke="#f8e494" stroke-width=".6"><ellipse cx="1082" cy="73.5" rx="27" ry="8.5" transform="rotate(-33 1082 73.5)"/></g>
<circle cx="1079.2" cy="77.9" r="7.1" fill="url(#gSph)"/>
<g fill="none"><ellipse cx="1070.4" cy="79.2" rx="19.8" ry="5.2" transform="rotate(77 1070.4 79.2)" stroke="#e4b838" stroke-width="1.8"/><ellipse cx="1070.4" cy="79.2" rx="19.8" ry="5.2" transform="rotate(77 1070.4 79.2)" stroke="#f8e494" stroke-width=".6"/></g>
<circle cx="1073.2" cy="66.3" r="2.9" fill="#c44a22"/><circle cx="1072.5" cy="65.5" r="1" fill="#e89070"/>
<rect x="499.5" y="143.3" width="9.5" height="11.4" fill="#cfd3de" stroke="#b8bcc9" stroke-width="1"/>
<circle cx="506.6" cy="150.8" r="3.9" fill="#d0d3dc" stroke="#b4b8c6" stroke-width="1"/><circle cx="506.6" cy="150.8" r="1.6" fill="#dde0e8" stroke="#bcc0cc" stroke-width=".6"/>
<path d="M576.6 151.6L581.2 155.4" stroke="#d08c44" stroke-width="2.2" stroke-linecap="round"/>
<circle cx="573.3" cy="148" r="4.7" fill="#b4d8fa" stroke="#6c94cc" stroke-width="1.2"/><circle cx="572.2" cy="146.8" r="2" fill="#e4f2fe" opacity=".8"/>
<rect x="594.5" y="143.8" width="9" height="10.6" fill="#fbfcff" stroke="#5c7cb4" stroke-width=".9"/><path d="M599 143.8V154.4M594.5 147.3H603.5M594.5 150.8H603.5" stroke="#7c98c8" stroke-width=".8"/>
<rect x="590.4" y="146.2" width="5.2" height="5.6" fill="#8cc43c" stroke="#5c9420" stroke-width=".8"/><path d="M591.6 149H594.4M593 147.6V150.4" stroke="#e8f8d0" stroke-width=".8"/>
<circle cx="619.2" cy="149.3" r="6.6" fill="#e23434" stroke="#b82020" stroke-width=".8"/><path d="M616.4 146.5L622 152.1M622 146.5L616.4 152.1" stroke="#fff" stroke-width="2" stroke-linecap="round"/>
<path d="M658.41 148.20L658.41 150.40L656.59 150.33L655.97 151.82L657.31 153.05L655.75 154.61L654.52 153.27L653.03 153.89L653.10 155.71L650.90 155.71L650.97 153.89L649.48 153.27L648.25 154.61L646.69 153.05L648.03 151.82L647.41 150.33L645.59 150.40L645.59 148.20L647.41 148.27L648.03 146.78L646.69 145.55L648.25 143.99L649.48 145.33L650.97 144.71L650.90 142.89L653.10 142.89L653.03 144.71L654.52 145.33L655.75 143.99L657.31 145.55L655.97 146.78L656.59 148.27Z" fill="#cfd6e8" stroke="#7f8aa8" stroke-width="1.1" stroke-linejoin="round"/><circle cx="652" cy="149.3" r="2.1" fill="#dadeeb" stroke="#7f8aa8" stroke-width="1"/>
<path d="M224.7 148.4H228.9L226.8 150.8Z" fill="#4c5468"/>
<path d="M92.4 613.0H96.6L94.5 615.4Z" fill="#4c5468"/>
<path d="M167.7 613.0H171.9L169.8 615.4Z" fill="#4c5468"/>
<path d="M765.0 169.6H769.4L767.2 167.2Z" fill="#4c5468"/>
<path d="M765.0 174.6H769.4L767.2 177.0Z" fill="#4c5468"/>
<path d="M892.0 169.6H896.4L894.2 167.2Z" fill="#4c5468"/>
<path d="M892.0 174.6H896.4L894.2 177.0Z" fill="#4c5468"/>
<rect x="652.4" y="267.8" width="8.8" height="14.2" fill="#a4aaba"/>
<path d="M654.3 253.2H659.3L656.8 250.4Z" fill="#5a6478"/>
<path d="M654.3 314.5H659.3L656.8 317.3Z" fill="#5a6478"/>
<rect x="652.4" y="462.3" width="8.8" height="14.2" fill="#a4aaba"/>
<path d="M654.3 360.8H659.3L656.8 358.0Z" fill="#5a6478"/>
<path d="M654.3 584.4H659.3L656.8 587.2Z" fill="#5a6478"/>
<path d="M273.6 201.6l3 4M276.6 201.6l-3 4M276.7 201.6l3 4M279.7 201.6l-3 4M279.8 201.6l3 4M282.8 201.6l-3 4M282.9 201.6l3 4M285.9 201.6l-3 4" stroke="#98a3ba" stroke-width=".7" fill="none"/>
<path d="M273.6 326.4l3 4M276.6 326.4l-3 4M276.7 326.4l3 4M279.7 326.4l-3 4M279.8 326.4l3 4M282.8 326.4l-3 4M282.9 326.4l3 4M285.9 326.4l-3 4" stroke="#98a3ba" stroke-width=".7" fill="none"/>
<path d="M273.6 596.4l3 4M276.6 596.4l-3 4M276.7 596.4l3 4M279.7 596.4l-3 4M279.8 596.4l3 4M282.8 596.4l-3 4M282.9 596.4l3 4M285.9 596.4l-3 4" stroke="#98a3ba" stroke-width=".7" fill="none"/>
<path d="M668.0 400.8l4 3M672.0 400.8l-4 3M668.0 403.9l4 3M672.0 403.9l-4 3M668.0 407.0l4 3M672.0 407.0l-4 3M668.0 410.1l4 3M672.0 410.1l-4 3" stroke="#8e9ab2" stroke-width=".8" fill="none"/>
<rect x="630" y="646.3" width="9" height="9" fill="#fdfdfe" stroke="#a8afc0" stroke-width="1"/>
<path d="M632 651.0L633.9 653.0L637.2 648.4" stroke="#6c7488" stroke-width="1.2" fill="none"/>
<rect x="630" y="662.5" width="9" height="9" fill="#fdfdfe" stroke="#a8afc0" stroke-width="1"/>
<path d="M632 667.2L633.9 669.2L637.2 664.6" stroke="#6c7488" stroke-width="1.2" fill="none"/>
</svg>
</body></html>
